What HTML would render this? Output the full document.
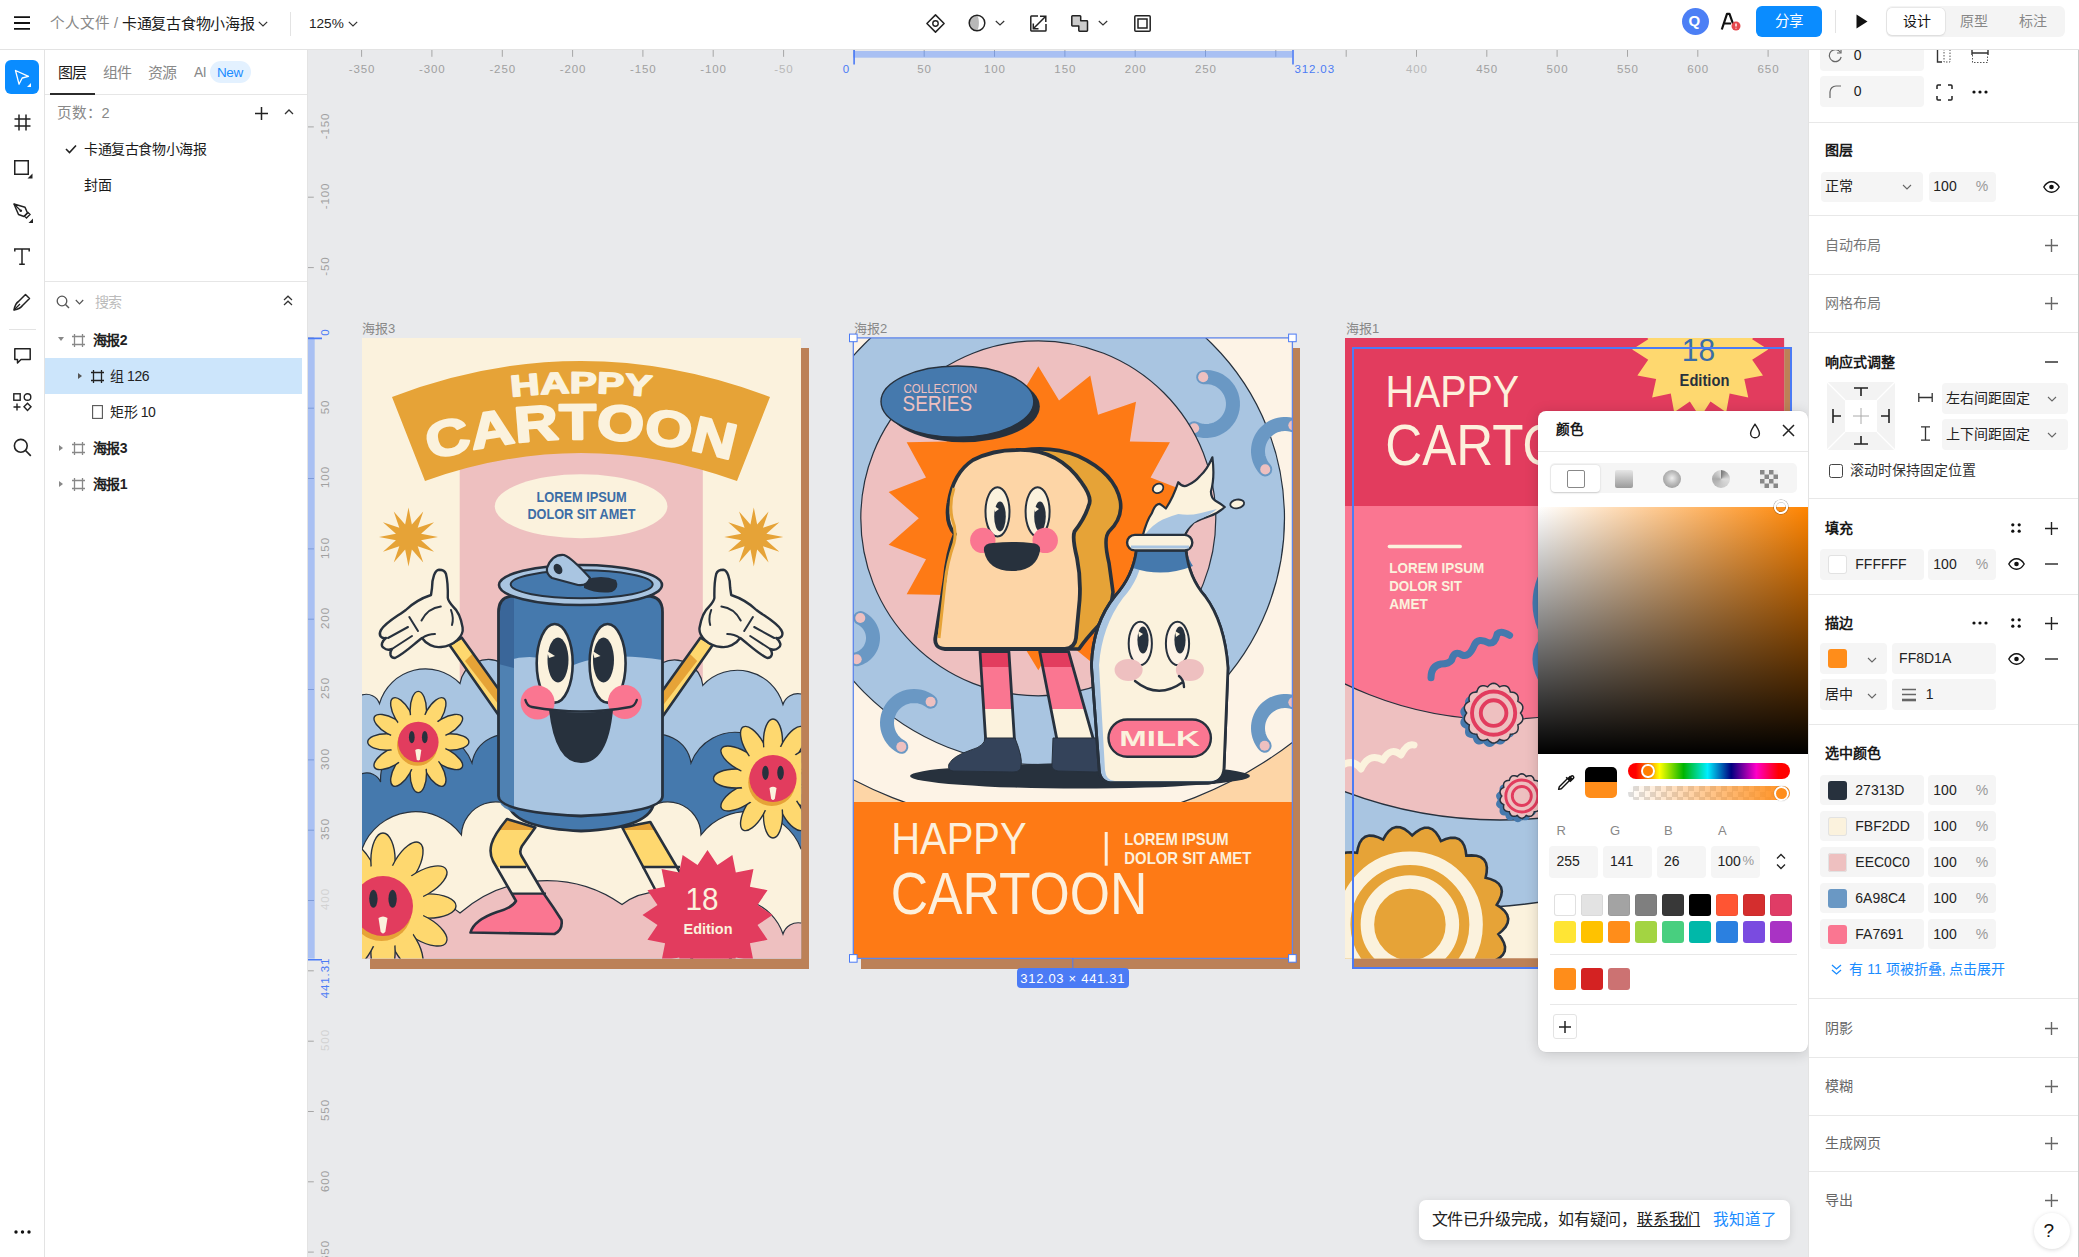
<!DOCTYPE html>
<html lang="zh-CN">
<head>
<meta charset="utf-8">
<style>
*{box-sizing:border-box;margin:0;padding:0}
html,body{width:2079px;height:1257px;overflow:hidden;background:#e9eaec;font-family:"Liberation Sans",sans-serif;color:#222}
.a{position:absolute}
.t{position:absolute;white-space:nowrap;line-height:1}
#top{z-index:5;left:0;top:0;width:2079px;height:50px;background:#fff;border-bottom:1px solid #e3e3e3}
#ltool{left:0;top:49px;width:45px;height:1208px;background:#fff;border-right:1px solid #e3e3e3}
#lpanel{left:45px;top:49px;width:263px;height:1208px;background:#fff;border-right:1px solid #e3e3e3}
#rpanel{left:1808px;top:49px;width:271px;height:1208px;background:#fff;border-left:1px solid #e3e3e3;overflow:hidden}
.sep{position:absolute;height:1px;background:#e8e8e8}
.inp{position:absolute;background:#f5f5f5;border-radius:4px}
.gl{color:#777}
.ttl{font-weight:bold;font-size:14px}
svg{position:absolute;overflow:visible}
#rpanel .t{margin-left:-2.2px}
#lpanel .t{font-size:14px;letter-spacing:-0.4px}
</style>
</head>
<body>
<!-- CANVAS -->
<div id="canvas" class="a" style="left:308px;top:50px;width:1500px;height:1207px;background:#e9eaec"></div>
<svg style="left:0;top:0;position:absolute" width="2079" height="1257">
<path d="M361.6 50V56.8" stroke="#a6a6a6" stroke-width="1"/>
<path d="M431.9 50V56.8" stroke="#a6a6a6" stroke-width="1"/>
<path d="M502.3 50V56.8" stroke="#a6a6a6" stroke-width="1"/>
<path d="M572.6 50V56.8" stroke="#a6a6a6" stroke-width="1"/>
<path d="M642.9 50V56.8" stroke="#a6a6a6" stroke-width="1"/>
<path d="M713.2 50V56.8" stroke="#a6a6a6" stroke-width="1"/>
<path d="M783.6 50V56.8" stroke="#a6a6a6" stroke-width="1"/>
<path d="M853.9 50V56.8" stroke="#a6a6a6" stroke-width="1"/>
<path d="M924.2 50V56.8" stroke="#a6a6a6" stroke-width="1"/>
<path d="M994.5 50V56.8" stroke="#a6a6a6" stroke-width="1"/>
<path d="M1064.9 50V56.8" stroke="#a6a6a6" stroke-width="1"/>
<path d="M1135.2 50V56.8" stroke="#a6a6a6" stroke-width="1"/>
<path d="M1205.5 50V56.8" stroke="#a6a6a6" stroke-width="1"/>
<path d="M1275.8 50V56.8" stroke="#a6a6a6" stroke-width="1"/>
<path d="M1346.2 50V56.8" stroke="#a6a6a6" stroke-width="1"/>
<path d="M1416.5 50V56.8" stroke="#a6a6a6" stroke-width="1"/>
<path d="M1486.8 50V56.8" stroke="#a6a6a6" stroke-width="1"/>
<path d="M1557.1 50V56.8" stroke="#a6a6a6" stroke-width="1"/>
<path d="M1627.5 50V56.8" stroke="#a6a6a6" stroke-width="1"/>
<path d="M1697.8 50V56.8" stroke="#a6a6a6" stroke-width="1"/>
<path d="M1768.1 50V56.8" stroke="#a6a6a6" stroke-width="1"/>
<rect x="853.3" y="51" width="438.9" height="6.7" fill="#a9c0f3"/>
<path d="M924.2 51V56.8" stroke="#7f9bd8" stroke-width="1"/>
<path d="M994.5 51V56.8" stroke="#7f9bd8" stroke-width="1"/>
<path d="M1064.9 51V56.8" stroke="#7f9bd8" stroke-width="1"/>
<path d="M1135.2 51V56.8" stroke="#7f9bd8" stroke-width="1"/>
<path d="M1205.5 51V56.8" stroke="#7f9bd8" stroke-width="1"/>
<path d="M1275.8 51V56.8" stroke="#7f9bd8" stroke-width="1"/>
<path d="M854.1 50V64.5M1293.0 50V64.5" stroke="#4b7bf5" stroke-width="1.6"/>
</svg>
<div class="t" style="left:337.0px;top:63.5px;width:50px;text-align:center;font-size:11.5px;letter-spacing:0.9px;color:#a0a0a0">-350</div>
<div class="t" style="left:407.3px;top:63.5px;width:50px;text-align:center;font-size:11.5px;letter-spacing:0.9px;color:#a0a0a0">-300</div>
<div class="t" style="left:477.7px;top:63.5px;width:50px;text-align:center;font-size:11.5px;letter-spacing:0.9px;color:#a0a0a0">-250</div>
<div class="t" style="left:548.0px;top:63.5px;width:50px;text-align:center;font-size:11.5px;letter-spacing:0.9px;color:#a0a0a0">-200</div>
<div class="t" style="left:618.3px;top:63.5px;width:50px;text-align:center;font-size:11.5px;letter-spacing:0.9px;color:#a0a0a0">-150</div>
<div class="t" style="left:688.6px;top:63.5px;width:50px;text-align:center;font-size:11.5px;letter-spacing:0.9px;color:#a0a0a0">-100</div>
<div class="t" style="left:759.0px;top:63.5px;width:50px;text-align:center;font-size:11.5px;letter-spacing:0.9px;color:#b8b8b8">-50</div>
<div class="t" style="left:899.6px;top:63.5px;width:50px;text-align:center;font-size:11.5px;letter-spacing:0.9px;color:#a0a0a0">50</div>
<div class="t" style="left:969.9px;top:63.5px;width:50px;text-align:center;font-size:11.5px;letter-spacing:0.9px;color:#a0a0a0">100</div>
<div class="t" style="left:1040.3px;top:63.5px;width:50px;text-align:center;font-size:11.5px;letter-spacing:0.9px;color:#a0a0a0">150</div>
<div class="t" style="left:1110.6px;top:63.5px;width:50px;text-align:center;font-size:11.5px;letter-spacing:0.9px;color:#a0a0a0">200</div>
<div class="t" style="left:1180.9px;top:63.5px;width:50px;text-align:center;font-size:11.5px;letter-spacing:0.9px;color:#a0a0a0">250</div>
<div class="t" style="left:1391.9px;top:63.5px;width:50px;text-align:center;font-size:11.5px;letter-spacing:0.9px;color:#b8b8b8">400</div>
<div class="t" style="left:1462.2px;top:63.5px;width:50px;text-align:center;font-size:11.5px;letter-spacing:0.9px;color:#a0a0a0">450</div>
<div class="t" style="left:1532.5px;top:63.5px;width:50px;text-align:center;font-size:11.5px;letter-spacing:0.9px;color:#a0a0a0">500</div>
<div class="t" style="left:1602.9px;top:63.5px;width:50px;text-align:center;font-size:11.5px;letter-spacing:0.9px;color:#a0a0a0">550</div>
<div class="t" style="left:1673.2px;top:63.5px;width:50px;text-align:center;font-size:11.5px;letter-spacing:0.9px;color:#a0a0a0">600</div>
<div class="t" style="left:1743.5px;top:63.5px;width:50px;text-align:center;font-size:11.5px;letter-spacing:0.9px;color:#a0a0a0">650</div>
<div class="t" style="left:842.8px;top:63.5px;font-size:11.5px;letter-spacing:0.9px;color:#4b7bf5">0</div>
<div class="t" style="left:1294.4px;top:63.5px;font-size:11.5px;letter-spacing:0.9px;color:#4b7bf5">312.03</div>
<svg style="left:0;top:0;position:absolute" width="2079" height="1257">
<path d="M308 126.9H313.8" stroke="#a6a6a6" stroke-width="1"/>
<path d="M308 197.2H313.8" stroke="#a6a6a6" stroke-width="1"/>
<path d="M308 267.6H313.8" stroke="#a6a6a6" stroke-width="1"/>
<path d="M308 337.9H313.8" stroke="#a6a6a6" stroke-width="1"/>
<path d="M308 408.2H313.8" stroke="#a6a6a6" stroke-width="1"/>
<path d="M308 478.5H313.8" stroke="#a6a6a6" stroke-width="1"/>
<path d="M308 548.9H313.8" stroke="#a6a6a6" stroke-width="1"/>
<path d="M308 619.2H313.8" stroke="#a6a6a6" stroke-width="1"/>
<path d="M308 689.5H313.8" stroke="#a6a6a6" stroke-width="1"/>
<path d="M308 759.9H313.8" stroke="#a6a6a6" stroke-width="1"/>
<path d="M308 830.2H313.8" stroke="#a6a6a6" stroke-width="1"/>
<path d="M308 900.5H313.8" stroke="#a6a6a6" stroke-width="1"/>
<path d="M308 970.8H313.8" stroke="#a6a6a6" stroke-width="1"/>
<path d="M308 1041.2H313.8" stroke="#a6a6a6" stroke-width="1"/>
<path d="M308 1111.5H313.8" stroke="#a6a6a6" stroke-width="1"/>
<path d="M308 1181.8H313.8" stroke="#a6a6a6" stroke-width="1"/>
<path d="M308 1252.1H313.8" stroke="#a6a6a6" stroke-width="1"/>
<rect x="307.5" y="337.9" width="7.2" height="620.7" fill="#a9c0f3"/>
<path d="M308 408.2H314" stroke="#7f9bd8" stroke-width="1"/>
<path d="M308 478.5H314" stroke="#7f9bd8" stroke-width="1"/>
<path d="M308 548.9H314" stroke="#7f9bd8" stroke-width="1"/>
<path d="M308 619.2H314" stroke="#7f9bd8" stroke-width="1"/>
<path d="M308 689.5H314" stroke="#7f9bd8" stroke-width="1"/>
<path d="M308 759.9H314" stroke="#7f9bd8" stroke-width="1"/>
<path d="M308 830.2H314" stroke="#7f9bd8" stroke-width="1"/>
<path d="M308 900.5H314" stroke="#7f9bd8" stroke-width="1"/>
<path d="M307.5 338.4H322M307.5 959.8H322" stroke="#4b7bf5" stroke-width="1.6"/>
</svg>
<div class="t" style="left:300.5px;top:119.7px;width:50px;height:12px;text-align:center;font-size:11.5px;letter-spacing:0.9px;color:#a0a0a0;transform:rotate(-90deg)">-150</div>
<div class="t" style="left:300.5px;top:190.0px;width:50px;height:12px;text-align:center;font-size:11.5px;letter-spacing:0.9px;color:#a0a0a0;transform:rotate(-90deg)">-100</div>
<div class="t" style="left:300.5px;top:260.4px;width:50px;height:12px;text-align:center;font-size:11.5px;letter-spacing:0.9px;color:#a0a0a0;transform:rotate(-90deg)">-50</div>
<div class="t" style="left:300.5px;top:401.0px;width:50px;height:12px;text-align:center;font-size:11.5px;letter-spacing:0.9px;color:#a0a0a0;transform:rotate(-90deg)">50</div>
<div class="t" style="left:300.5px;top:471.3px;width:50px;height:12px;text-align:center;font-size:11.5px;letter-spacing:0.9px;color:#a0a0a0;transform:rotate(-90deg)">100</div>
<div class="t" style="left:300.5px;top:541.7px;width:50px;height:12px;text-align:center;font-size:11.5px;letter-spacing:0.9px;color:#a0a0a0;transform:rotate(-90deg)">150</div>
<div class="t" style="left:300.5px;top:612.0px;width:50px;height:12px;text-align:center;font-size:11.5px;letter-spacing:0.9px;color:#a0a0a0;transform:rotate(-90deg)">200</div>
<div class="t" style="left:300.5px;top:682.3px;width:50px;height:12px;text-align:center;font-size:11.5px;letter-spacing:0.9px;color:#a0a0a0;transform:rotate(-90deg)">250</div>
<div class="t" style="left:300.5px;top:752.6px;width:50px;height:12px;text-align:center;font-size:11.5px;letter-spacing:0.9px;color:#a0a0a0;transform:rotate(-90deg)">300</div>
<div class="t" style="left:300.5px;top:823.0px;width:50px;height:12px;text-align:center;font-size:11.5px;letter-spacing:0.9px;color:#a0a0a0;transform:rotate(-90deg)">350</div>
<div class="t" style="left:300.5px;top:893.3px;width:50px;height:12px;text-align:center;font-size:11.5px;letter-spacing:0.9px;color:#d2d2d2;transform:rotate(-90deg)">400</div>
<div class="t" style="left:300.5px;top:1034.0px;width:50px;height:12px;text-align:center;font-size:11.5px;letter-spacing:0.9px;color:#d2d2d2;transform:rotate(-90deg)">500</div>
<div class="t" style="left:300.5px;top:1104.3px;width:50px;height:12px;text-align:center;font-size:11.5px;letter-spacing:0.9px;color:#a0a0a0;transform:rotate(-90deg)">550</div>
<div class="t" style="left:300.5px;top:1174.6px;width:50px;height:12px;text-align:center;font-size:11.5px;letter-spacing:0.9px;color:#a0a0a0;transform:rotate(-90deg)">600</div>
<div class="t" style="left:300.5px;top:1244.9px;width:50px;height:12px;text-align:center;font-size:11.5px;letter-spacing:0.9px;color:#a0a0a0;transform:rotate(-90deg)">650</div>
<div class="t" style="left:300.5px;top:326.4px;width:50px;height:12px;text-align:center;font-size:11.5px;letter-spacing:0.9px;color:#4b7bf5;transform:rotate(-90deg)">0</div>
<div class="t" style="left:300.5px;top:972.1px;width:50px;height:12px;text-align:center;font-size:11.5px;letter-spacing:0.9px;color:#4b7bf5;transform:rotate(-90deg)">441.31</div>
<div class="t" style="left:362px;top:321.5px;font-size:13px;color:#888">海报3</div>
<div class="t" style="left:854px;top:321.5px;font-size:13px;color:#888">海报2</div>
<div class="t" style="left:1346px;top:321.5px;font-size:13px;color:#888">海报1</div>
<div class="a" style="left:369.5px;top:347.9px;width:439.1px;height:621.3px;background:#bc8157"></div>
<div class="a" style="left:860.8px;top:347.9px;width:439.1px;height:621.3px;background:#bc8157"></div>
<div class="a" style="left:1352.5px;top:347.9px;width:439.1px;height:621.3px;background:#bc8157"></div>
<svg style="left:362px;top:337.9px" width="439.1" height="620.5" viewBox="0 0 439.1 620.5"><defs><clipPath id="c3"><rect width="439.1" height="620.5"/></clipPath></defs><g clip-path="url(#c3)">
<rect width="439.1" height="620.5" fill="#fbf2dd"/>
<rect x="97.7" y="110" width="243.1" height="510.5" fill="#eec0c0"/>
<path d="M30,59 Q219,-13 408,59 L375,143 Q219,87 63,143 Z" fill="#e6a337"/>
<text x="0" y="0" text-anchor="middle" font-family="Liberation Sans" font-weight="bold" font-size="30" fill="#fbf2dd" transform="translate(163.75,57.49) rotate(-5.15) scale(1.35,1)" stroke="#fbf2dd" stroke-width="1.6" stroke-linejoin="round">H</text>
<text x="0" y="0" text-anchor="middle" font-family="Liberation Sans" font-weight="bold" font-size="30" fill="#fbf2dd" transform="translate(193.02,55.55) rotate(-2.43) scale(1.35,1)" stroke="#fbf2dd" stroke-width="1.6" stroke-linejoin="round">A</text>
<text x="0" y="0" text-anchor="middle" font-family="Liberation Sans" font-weight="bold" font-size="30" fill="#fbf2dd" transform="translate(221.24,55) rotate(0.21) scale(1.35,1)" stroke="#fbf2dd" stroke-width="1.6" stroke-linejoin="round">P</text>
<text x="0" y="0" text-anchor="middle" font-family="Liberation Sans" font-weight="bold" font-size="30" fill="#fbf2dd" transform="translate(248.33,55.7) rotate(2.74) scale(1.35,1)" stroke="#fbf2dd" stroke-width="1.6" stroke-linejoin="round">P</text>
<text x="0" y="0" text-anchor="middle" font-family="Liberation Sans" font-weight="bold" font-size="30" fill="#fbf2dd" transform="translate(275.37,57.59) rotate(5.26) scale(1.35,1)" stroke="#fbf2dd" stroke-width="1.6" stroke-linejoin="round">Y</text>
<text x="0" y="0" text-anchor="middle" font-family="Liberation Sans" font-weight="bold" font-size="50" fill="#fbf2dd" transform="translate(89.54,116.69) rotate(-13.63) scale(1.21,1)" stroke="#fbf2dd" stroke-width="2.2" stroke-linejoin="round">C</text>
<text x="0" y="0" text-anchor="middle" font-family="Liberation Sans" font-weight="bold" font-size="50" fill="#fbf2dd" transform="translate(132.22,108.05) rotate(-9.23) scale(1.21,1)" stroke="#fbf2dd" stroke-width="2.2" stroke-linejoin="round">A</text>
<text x="0" y="0" text-anchor="middle" font-family="Liberation Sans" font-weight="bold" font-size="50" fill="#fbf2dd" transform="translate(175.46,102.78) rotate(-4.66) scale(1.21,1)" stroke="#fbf2dd" stroke-width="2.2" stroke-linejoin="round">R</text>
<text x="0" y="0" text-anchor="middle" font-family="Liberation Sans" font-weight="bold" font-size="50" fill="#fbf2dd" transform="translate(215.62,101.01) rotate(-0.36) scale(1.21,1)" stroke="#fbf2dd" stroke-width="2.2" stroke-linejoin="round">T</text>
<text x="0" y="0" text-anchor="middle" font-family="Liberation Sans" font-weight="bold" font-size="50" fill="#fbf2dd" transform="translate(257.49,102.39) rotate(4.12) scale(1.21,1)" stroke="#fbf2dd" stroke-width="2.2" stroke-linejoin="round">O</text>
<text x="0" y="0" text-anchor="middle" font-family="Liberation Sans" font-weight="bold" font-size="50" fill="#fbf2dd" transform="translate(304.11,107.78) rotate(9.06) scale(1.21,1)" stroke="#fbf2dd" stroke-width="2.2" stroke-linejoin="round">O</text>
<text x="0" y="0" text-anchor="middle" font-family="Liberation Sans" font-weight="bold" font-size="50" fill="#fbf2dd" transform="translate(348.46,116.69) rotate(13.63) scale(1.21,1)" stroke="#fbf2dd" stroke-width="2.2" stroke-linejoin="round">N</text>
<ellipse cx="219.1" cy="168.3" rx="86.3" ry="32" fill="#fbf2dd"/>
<text x="219.6" y="163.7" text-anchor="middle" font-family="Liberation Sans" font-weight="bold" font-size="15" fill="#3c6da6" textLength="90.4" lengthAdjust="spacingAndGlyphs">LOREM IPSUM</text>
<text x="219.4" y="181" text-anchor="middle" font-family="Liberation Sans" font-weight="bold" font-size="15" fill="#3c6da6" textLength="108" lengthAdjust="spacingAndGlyphs">DOLOR SIT AMET</text>
<path d="M46.5,169.5L49.86,186.44L61.25,173.45L55.69,189.81L72.05,184.25L59.06,195.64L76,199L59.06,202.36L72.05,213.75L55.69,208.19L61.25,224.55L49.86,211.56L46.5,228.5L43.14,211.56L31.75,224.55L37.31,208.19L20.95,213.75L33.94,202.36L17,199L33.94,195.64L20.95,184.25L37.31,189.81L31.75,173.45L43.14,186.44Z" fill="#e6a337"/>
<path d="M391.8,169.5L395.16,186.44L406.55,173.45L400.99,189.81L417.35,184.25L404.36,195.64L421.3,199L404.36,202.36L417.35,213.75L400.99,208.19L406.55,224.55L395.16,211.56L391.8,228.5L388.44,211.56L377.05,224.55L382.61,208.19L366.25,213.75L379.24,202.36L362.3,199L379.24,195.64L366.25,184.25L382.61,189.81L377.05,173.45L388.44,186.44Z" fill="#e6a337"/>
<path d="M-5,625.5L-5,357L0,357A13.88 13.88 0 0 1 17.5,365.6A47.86 47.86 0 0 1 98,345.5A28.75 28.75 0 0 1 140,325A170 170 0 0 1 300,325A28.52 28.52 0 0 1 340.8,347.3A47.42 47.42 0 0 1 421,366.5A15.68 15.68 0 0 1 439.1,356L444.1,356L444.1,625.5Z" fill="#a9c5e1" stroke="#27313d" stroke-width="1.2"/>
<path d="M-5,625.5L-5,435.7L0,435.7A14.96 14.96 0 0 1 18.6,444A47.23 47.23 0 0 1 110,425A34.9 34.9 0 0 1 160,400A100 100 0 0 1 280,400A34.02 34.02 0 0 1 329,425A47.29 47.29 0 0 1 420.5,444A14.96 14.96 0 0 1 439.1,435.7L444.1,435.7L444.1,625.5Z" fill="#4579ad" stroke="#27313d" stroke-width="1.2"/>
<path d="M-5,625.5L-5,511L0,511A56.98 56.98 0 0 1 99.4,497A34.37 34.37 0 0 1 160,476A362.5 362.5 0 0 1 280,476A33.28 33.28 0 0 1 339,497A57.57 57.57 0 0 1 439.1,511L444.1,511L444.1,625.5Z" fill="#fbf2dd" stroke="#27313d" stroke-width="1.2"/>
<path d="M-5,625.5L-5,590L0,590A66.85 66.85 0 0 1 98,575A131.48 131.48 0 0 1 260,566.5A61.09 61.09 0 0 1 340,572A51.55 51.55 0 0 1 421,596A16.02 16.02 0 0 1 439.1,585L444.1,585L444.1,625.5Z" fill="#eec0c0" stroke="#27313d" stroke-width="1.2"/>
<path d="M87.5,307 L99.8,299.7 L140,356 L140,382 Z" fill="#fed86f"/><path d="M103,323 L110.2,316 L140,358 L140,371 Z" fill="#e6a337"/><path d="M87.5,307 L99.8,299.7 L140,356 L140,382 Z" fill="none" stroke="#27313d" stroke-width="2.6" stroke-linejoin="round"/>
<g transform="translate(438.2,0) scale(-1,1)"><path d="M87.5,307 L99.8,299.7 L140,356 L140,382 Z" fill="#fed86f"/><path d="M103,323 L110.2,316 L140,358 L140,371 Z" fill="#e6a337"/><path d="M87.5,307 L99.8,299.7 L140,356 L140,382 Z" fill="none" stroke="#27313d" stroke-width="2.6" stroke-linejoin="round"/></g>
<path d="M77,231.8 C73,232 70,240 70,250 L69,257 C60,260 50,266 43.8,272 C36,278 24,284 19,292 C16,297 19,301 24,300 C20,303 18,308 22,310 C24,312 27,312 30,311 C27,315 28,320 33,320 C42,316 52,306 60,300 C64,306 72,310 79,309 C92,308 102,298 100.6,289.5 C99,280 95,272 91,268.5 C88,265 86,262 85.8,259.8 C86,250 85,240 84,236 C83,233 80,231.8 77,231.8 Z" fill="#fbf2dd" stroke="#27313d" stroke-width="2.4" stroke-linejoin="round"/><path d="M59.5,282.5 Q66,270 78.8,268.5 M47.3,279 L56,293 M26,300 L46,289 M30,311 L50,298 M60,300 Q66,296 73,296 M89,272 Q92,280 90,287" fill="none" stroke="#27313d" stroke-width="2" stroke-linecap="round"/>
<g transform="translate(438.2,0) scale(-1,1)"><path d="M77,231.8 C73,232 70,240 70,250 L69,257 C60,260 50,266 43.8,272 C36,278 24,284 19,292 C16,297 19,301 24,300 C20,303 18,308 22,310 C24,312 27,312 30,311 C27,315 28,320 33,320 C42,316 52,306 60,300 C64,306 72,310 79,309 C92,308 102,298 100.6,289.5 C99,280 95,272 91,268.5 C88,265 86,262 85.8,259.8 C86,250 85,240 84,236 C83,233 80,231.8 77,231.8 Z" fill="#fbf2dd" stroke="#27313d" stroke-width="2.4" stroke-linejoin="round"/><path d="M59.5,282.5 Q66,270 78.8,268.5 M47.3,279 L56,293 M26,300 L46,289 M30,311 L50,298 M60,300 Q66,296 73,296 M89,272 Q92,280 90,287" fill="none" stroke="#27313d" stroke-width="2" stroke-linecap="round"/></g>
<linearGradient id="lg3" gradientUnits="userSpaceOnUse" x1="0" y1="480" x2="0" y2="600"><stop offset="0" stop-color="#e6a337"/><stop offset="0.1" stop-color="#e6a337"/><stop offset="0.1" stop-color="#fed86f"/><stop offset="0.408" stop-color="#fed86f"/><stop offset="0.408" stop-color="#fbf2dd"/><stop offset="0.63" stop-color="#fbf2dd"/><stop offset="0.63" stop-color="#fa7691"/><stop offset="1" stop-color="#fa7691"/></linearGradient>
<path d="M145,481 Q132,497 129.5,506 Q127,515 131,523 L154,563 Q150,570 135,574 Q112,582 108.5,594.5 L192.5,596 Q201,592 199.5,582 Q192,570 182,556 L159.3,517.5 Q157,513 160,508 L173.3,489.5 Z" fill="url(#lg3)" stroke="#27313d" stroke-width="2.6" stroke-linejoin="round"/>
<path d="M138,529 L164,529 M150,555.6 L184,555.6" stroke="#27313d" stroke-width="2.4"/>
<path d="M260.3,489.5 L340,640 L380,640 L288.3,484 Z" fill="url(#lg3)" stroke="#27313d" stroke-width="2.6" stroke-linejoin="round"/>
<path d="M280,529 L318,529" stroke="#27313d" stroke-width="2.4"/>
<path d="M146,462 Q146,490 219,493 Q292,490 292,462 Z" fill="#4579ad" stroke="#27313d" stroke-width="2.8"/>
<path d="M136.5,274 Q136.5,258 152,258 L285,258 Q300.5,258 300.5,274 L300.5,458 Q300.5,474 219,478 Q136.5,474 136.5,458 Z" fill="#4579ad"/>
<path d="M136.5,326 Q172,310 205,330 Q240,312 300.5,322 L300.5,458 Q300.5,474 219,478 Q136.5,474 136.5,458 Z" fill="#a9c5e1"/>
<path d="M136.5,274 Q136.5,258 152,258 L152,474 Q136.5,470 136.5,458 Z" fill="#4579ad" opacity="0.9"/>
<path d="M136.5,274 Q136.5,258 152,258 L152,330 L136.5,326 Z" fill="#3a6699"/>
<path d="M136.5,274 Q136.5,258 152,258 L285,258 Q300.5,258 300.5,274 L300.5,458 Q300.5,474 219,478 Q136.5,474 136.5,458 Z" fill="none" stroke="#27313d" stroke-width="2.8"/>
<ellipse cx="218.5" cy="247" rx="81.5" ry="20" fill="#a9c5e1" stroke="#27313d" stroke-width="2.6"/>
<ellipse cx="219.7" cy="246.3" rx="71" ry="14" fill="#4579ad" stroke="#27313d" stroke-width="2"/>
<path d="M222,242 Q240,236 254,242 Q258,250 250,254 Q235,256 222,250 Z" fill="#27313d"/>
<path d="M185,230 Q190,216 202,217 Q210,220 228,240 Q226,248 216,247 L190,240 Q184,236 185,230 Z" fill="#a9c5e1" stroke="#27313d" stroke-width="2.2" stroke-linejoin="round"/>
<ellipse cx="196" cy="231" rx="4" ry="5.5" transform="rotate(-30 196 231)" fill="#27313d"/>
<ellipse cx="192.7" cy="325.3" rx="18" ry="39.3" fill="#fbf2dd" stroke="#27313d" stroke-width="2.6"/>
<ellipse cx="196" cy="322" rx="10.5" ry="22.5" fill="#27313d"/>
<path d="M185,313 L193,318 L187,320 Z" fill="#fbf2dd"/>
<ellipse cx="245.6" cy="325.3" rx="18" ry="39.3" fill="#fbf2dd" stroke="#27313d" stroke-width="2.6"/>
<ellipse cx="241.5" cy="322" rx="10.5" ry="22.5" fill="#27313d"/>
<path d="M230.5,313 L238.5,318 L232.5,320 Z" fill="#fbf2dd"/>
<circle cx="175.6" cy="364.6" r="17" fill="#fa7691"/>
<circle cx="262.9" cy="364" r="17" fill="#fa7691"/>
<path d="M163.4,362 Q165,368 170,369 Q219,378 268,369 Q273,368 274.8,362" fill="none" stroke="#27313d" stroke-width="2.4" stroke-linecap="round"/>
<path d="M187,372 Q219,377 251,372 Q246,425 219,425 Q193,425 187,372Z" fill="#27313d"/>
<g stroke="#27313d" stroke-width="1.4">
<ellipse cx="31.39" cy="0" rx="19.21" ry="8.21" fill="#fed86f" transform="translate(56.3,404) rotate(0)"/>
<ellipse cx="31.39" cy="0" rx="19.21" ry="8.21" fill="#fed86f" transform="translate(56.3,404) rotate(30)"/>
<ellipse cx="31.39" cy="0" rx="19.21" ry="8.21" fill="#fed86f" transform="translate(56.3,404) rotate(60)"/>
<ellipse cx="31.39" cy="0" rx="19.21" ry="8.21" fill="#fed86f" transform="translate(56.3,404) rotate(90)"/>
<ellipse cx="31.39" cy="0" rx="19.21" ry="8.21" fill="#fed86f" transform="translate(56.3,404) rotate(120)"/>
<ellipse cx="31.39" cy="0" rx="19.21" ry="8.21" fill="#fed86f" transform="translate(56.3,404) rotate(150)"/>
<ellipse cx="31.39" cy="0" rx="19.21" ry="8.21" fill="#fed86f" transform="translate(56.3,404) rotate(180)"/>
<ellipse cx="31.39" cy="0" rx="19.21" ry="8.21" fill="#fed86f" transform="translate(56.3,404) rotate(210)"/>
<ellipse cx="31.39" cy="0" rx="19.21" ry="8.21" fill="#fed86f" transform="translate(56.3,404) rotate(240)"/>
<ellipse cx="31.39" cy="0" rx="19.21" ry="8.21" fill="#fed86f" transform="translate(56.3,404) rotate(270)"/>
<ellipse cx="31.39" cy="0" rx="19.21" ry="8.21" fill="#fed86f" transform="translate(56.3,404) rotate(300)"/>
<ellipse cx="31.39" cy="0" rx="19.21" ry="8.21" fill="#fed86f" transform="translate(56.3,404) rotate(330)"/>
</g>
<circle cx="56.3" cy="404" r="28.01" fill="#fed86f"/>
<circle cx="55.28" cy="407.45" r="20.3" fill="#e6a337"/>
<circle cx="56.3" cy="404" r="20.3" fill="#e23c5e"/>
<ellipse cx="49.8" cy="399.13" rx="2.84" ry="6.09" fill="#27313d"/>
<ellipse cx="62.8" cy="399.13" rx="2.84" ry="6.09" fill="#27313d"/>
<path d="M53.25,412.12Q56.3,410.09 59.34,412.12L57.92,421.25Q56.3,423.89 54.68,421.25Z" fill="#fbf2dd"/>
<g stroke="#27313d" stroke-width="1.4">
<ellipse cx="36.83" cy="0" rx="22.67" ry="9.55" fill="#fed86f" transform="translate(411,440.5) rotate(0)"/>
<ellipse cx="36.83" cy="0" rx="22.67" ry="9.55" fill="#fed86f" transform="translate(411,440.5) rotate(30)"/>
<ellipse cx="36.83" cy="0" rx="22.67" ry="9.55" fill="#fed86f" transform="translate(411,440.5) rotate(60)"/>
<ellipse cx="36.83" cy="0" rx="22.67" ry="9.55" fill="#fed86f" transform="translate(411,440.5) rotate(90)"/>
<ellipse cx="36.83" cy="0" rx="22.67" ry="9.55" fill="#fed86f" transform="translate(411,440.5) rotate(120)"/>
<ellipse cx="36.83" cy="0" rx="22.67" ry="9.55" fill="#fed86f" transform="translate(411,440.5) rotate(150)"/>
<ellipse cx="36.83" cy="0" rx="22.67" ry="9.55" fill="#fed86f" transform="translate(411,440.5) rotate(180)"/>
<ellipse cx="36.83" cy="0" rx="22.67" ry="9.55" fill="#fed86f" transform="translate(411,440.5) rotate(210)"/>
<ellipse cx="36.83" cy="0" rx="22.67" ry="9.55" fill="#fed86f" transform="translate(411,440.5) rotate(240)"/>
<ellipse cx="36.83" cy="0" rx="22.67" ry="9.55" fill="#fed86f" transform="translate(411,440.5) rotate(270)"/>
<ellipse cx="36.83" cy="0" rx="22.67" ry="9.55" fill="#fed86f" transform="translate(411,440.5) rotate(300)"/>
<ellipse cx="36.83" cy="0" rx="22.67" ry="9.55" fill="#fed86f" transform="translate(411,440.5) rotate(330)"/>
</g>
<circle cx="411" cy="440.5" r="32.57" fill="#fed86f"/>
<circle cx="409.82" cy="444.51" r="23.6" fill="#e6a337"/>
<circle cx="411" cy="440.5" r="23.6" fill="#e23c5e"/>
<ellipse cx="403.45" cy="434.84" rx="3.3" ry="7.08" fill="#27313d"/>
<ellipse cx="418.55" cy="434.84" rx="3.3" ry="7.08" fill="#27313d"/>
<path d="M407.46,449.94Q411,447.58 414.54,449.94L412.89,460.56Q411,463.63 409.11,460.56Z" fill="#fbf2dd"/>
<g stroke="#27313d" stroke-width="1.4">
<ellipse cx="45.5" cy="0" rx="27.5" ry="12.14" fill="#fed86f" transform="translate(21,568) rotate(0)"/>
<ellipse cx="45.5" cy="0" rx="27.5" ry="12.14" fill="#fed86f" transform="translate(21,568) rotate(30)"/>
<ellipse cx="45.5" cy="0" rx="27.5" ry="12.14" fill="#fed86f" transform="translate(21,568) rotate(60)"/>
<ellipse cx="45.5" cy="0" rx="27.5" ry="12.14" fill="#fed86f" transform="translate(21,568) rotate(90)"/>
<ellipse cx="45.5" cy="0" rx="27.5" ry="12.14" fill="#fed86f" transform="translate(21,568) rotate(120)"/>
<ellipse cx="45.5" cy="0" rx="27.5" ry="12.14" fill="#fed86f" transform="translate(21,568) rotate(150)"/>
<ellipse cx="45.5" cy="0" rx="27.5" ry="12.14" fill="#fed86f" transform="translate(21,568) rotate(180)"/>
<ellipse cx="45.5" cy="0" rx="27.5" ry="12.14" fill="#fed86f" transform="translate(21,568) rotate(210)"/>
<ellipse cx="45.5" cy="0" rx="27.5" ry="12.14" fill="#fed86f" transform="translate(21,568) rotate(240)"/>
<ellipse cx="45.5" cy="0" rx="27.5" ry="12.14" fill="#fed86f" transform="translate(21,568) rotate(270)"/>
<ellipse cx="45.5" cy="0" rx="27.5" ry="12.14" fill="#fed86f" transform="translate(21,568) rotate(300)"/>
<ellipse cx="45.5" cy="0" rx="27.5" ry="12.14" fill="#fed86f" transform="translate(21,568) rotate(330)"/>
</g>
<circle cx="21" cy="568" r="41.4" fill="#fed86f"/>
<circle cx="19.5" cy="573.1" r="30" fill="#e6a337"/>
<circle cx="21" cy="568" r="30" fill="#e23c5e"/>
<ellipse cx="11.4" cy="560.8" rx="4.2" ry="9" fill="#27313d"/>
<ellipse cx="30.6" cy="560.8" rx="4.2" ry="9" fill="#27313d"/>
<path d="M16.5,580Q21,577 25.5,580L23.4,593.5Q21,597.4 18.6,593.5Z" fill="#fbf2dd"/>
<path d="M345.5,512L355.45,526.98L370.37,516.95L373.83,534.6L391.46,531.04L387.9,548.67L405.55,552.13L395.52,567.05L410.5,577L395.52,586.95L405.55,601.87L387.9,605.33L391.46,622.96L373.83,619.4L370.37,637.05L355.45,627.02L345.5,642L335.55,627.02L320.63,637.05L317.17,619.4L299.54,622.96L303.1,605.33L285.45,601.87L295.48,586.95L280.5,577L295.48,567.05L285.45,552.13L303.1,548.67L299.54,531.04L317.17,534.6L320.63,516.95L335.55,526.98Z" fill="#e23c5e"/>
<text x="340" y="571.7" text-anchor="middle" font-family="Liberation Sans" font-size="31" fill="#fbf2dd" textLength="33" lengthAdjust="spacingAndGlyphs">18</text>
<text x="346" y="596" text-anchor="middle" font-family="Liberation Sans" font-weight="bold" font-size="15" fill="#fbf2dd" textLength="49" lengthAdjust="spacingAndGlyphs">Edition</text>
</g></svg>
<svg style="left:853.3px;top:337.9px" width="439.1" height="620.5" viewBox="0 0 439.1 620.5"><defs><clipPath id="c2"><rect width="439.1" height="620.5"/></clipPath></defs><g clip-path="url(#c2)">
<rect width="439.1" height="620.5" fill="#fdd5a6"/>
<circle cx="190.5" cy="77.8" r="410.6" fill="#fdf3e6" stroke="#27313d" stroke-width="1.2"/>
<circle cx="185.3" cy="180.3" r="246.2" fill="#a9c5e1" stroke="#27313d" stroke-width="1.2"/>
<path d="M350.18,39.15L353.5,39L356.82,39.27L360.08,39.94L363.23,41.01L366.23,42.46L369.02,44.27L371.57,46.4L373.84,48.84L375.8,51.53L377.4,54.45L378.64,57.54L379.49,60.76L379.93,64.05L379.96,67.38L379.59,70.69L378.81,73.92L377.64,77.04L376.09,79.99L374.2,82.72L371.98,85.2L369.47,87.39L366.72,89.26L363.75,90.77L360.62,91.9L357.38,92.64L354.07,92.98L350.74,92.91L347.45,92.42L344.24,91.54L341.16,90.27" fill="none" stroke="#6a98c4" stroke-width="14" stroke-linecap="round"/><circle cx="350.18" cy="39.15" r="5.04" fill="#eec0c0"/><circle cx="341.16" cy="90.27" r="5.04" fill="#eec0c0"/>
<path d="M440.34,87.32L438.06,86.69L435.73,86.26L433.37,86.03L430.99,86.02L428.63,86.21L426.29,86.61L424,87.21L421.77,88.01L419.62,89.01L417.56,90.19L415.61,91.54L413.79,93.06L412.11,94.74L410.59,96.55L409.23,98.49L408.04,100.55L407.04,102.7L406.24,104.93L405.63,107.22L405.22,109.55L405.02,111.92L405.03,114.29L405.25,116.65L405.67,118.98L406.3,121.27L407.12,123.49L408.14,125.63L409.34,127.68L410.71,129.61L412.25,131.41" fill="none" stroke="#6a98c4" stroke-width="14" stroke-linecap="round"/><circle cx="440.34" cy="87.32" r="5.04" fill="#eec0c0"/><circle cx="412.25" cy="131.41" r="5.04" fill="#eec0c0"/>
<path d="M7.3,280.06L8.89,280.88L10.41,281.83L11.85,282.9L13.19,284.09L14.43,285.37L15.57,286.76L16.59,288.23L17.48,289.78L18.25,291.4L18.88,293.08L19.38,294.8L19.73,296.56L19.94,298.34L20,300.13L19.92,301.92L19.69,303.69L19.32,305.45L18.8,307.16L18.15,308.83L17.36,310.44L16.45,311.98L15.41,313.44L14.26,314.82L13,316.09L11.65,317.26L10.2,318.31L8.67,319.24L7.06,320.05L5.4,320.72L3.69,321.25" fill="none" stroke="#6a98c4" stroke-width="14" stroke-linecap="round"/><circle cx="7.3" cy="280.06" r="5.04" fill="#eec0c0"/><circle cx="3.69" cy="321.25" r="5.04" fill="#eec0c0"/>
<path d="M77.62,363.72L75.17,362.02L72.55,360.6L69.79,359.47L66.92,358.66L63.98,358.16L61,358L58.02,358.16L55.08,358.66L52.21,359.47L49.45,360.6L46.83,362.02L44.38,363.72L42.13,365.69L40.12,367.89L38.36,370.29L36.87,372.88L35.68,375.62L34.8,378.47L34.24,381.4L34.01,384.37L34.1,387.35L34.53,390.31L35.27,393.19L36.33,395.98L37.7,398.64L39.34,401.12L41.25,403.41L43.41,405.48L45.77,407.3L48.32,408.84" fill="none" stroke="#6a98c4" stroke-width="14" stroke-linecap="round"/><circle cx="77.62" cy="363.72" r="5.04" fill="#eec0c0"/><circle cx="48.32" cy="408.84" r="5.04" fill="#eec0c0"/>
<path d="M440.34,364.32L438.09,363.7L435.79,363.27L433.46,363.04L431.12,363.01L428.79,363.19L426.48,363.57L424.21,364.15L422,364.92L419.87,365.88L417.83,367.02L415.89,368.33L414.07,369.81L412.39,371.44L410.86,373.2L409.49,375.1L408.28,377.1L407.25,379.2L406.41,381.39L405.76,383.64L405.31,385.93L405.06,388.26L405.01,390.6L405.16,392.93L405.51,395.24L406.07,397.52L406.82,399.73L407.75,401.88L408.87,403.93L410.17,405.88L411.62,407.71" fill="none" stroke="#6a98c4" stroke-width="14" stroke-linecap="round"/><circle cx="440.34" cy="364.32" r="5.04" fill="#eec0c0"/><circle cx="411.62" cy="407.71" r="5.04" fill="#eec0c0"/>
<circle cx="185.3" cy="180.3" r="177.5" fill="#eec0c0" stroke="#27313d" stroke-width="1.2"/>
<path d="M185.3,28.3L206.05,62.62L237.29,37.47L245.05,76.81L283,63.86L276.84,103.49L316.94,104.3L297.59,139.43L334.99,153.91L304.8,180.3L334.99,206.69L297.59,221.17L316.94,256.3L276.84,257.11L283,296.74L245.05,283.79L237.29,323.13L206.05,297.98L185.3,332.3L164.55,297.98L133.31,323.13L125.55,283.79L87.6,296.74L93.76,257.11L53.66,256.3L73.01,221.17L35.61,206.69L65.8,180.3L35.61,153.91L73.01,139.43L53.66,104.3L93.76,103.49L87.6,63.86L125.55,76.81L133.31,37.47L164.55,62.62Z" fill="#fe7a15"/>
<ellipse cx="110.4" cy="68.6" rx="76.4" ry="35.6" fill="#27313d"/>
<ellipse cx="104.4" cy="63.6" rx="76.4" ry="35.6" fill="#4579ad" stroke="#27313d" stroke-width="1.4"/>
<text x="50.4" y="54.7" font-family="Liberation Sans" font-size="12.2" fill="#eec0c0" textLength="73.8" lengthAdjust="spacingAndGlyphs">COLLECTION</text>
<text x="49.6" y="72.6" font-family="Liberation Sans" font-size="21.2" fill="#eec0c0" textLength="69.5" lengthAdjust="spacingAndGlyphs">SERIES</text>
<ellipse cx="227" cy="438" rx="170" ry="12.5" fill="#27313d"/>
<linearGradient id="lg2" gradientUnits="userSpaceOnUse" x1="0" y1="313" x2="0" y2="407"><stop offset="0" stop-color="#e23c5e"/><stop offset="0.17" stop-color="#e23c5e"/><stop offset="0.17" stop-color="#fa7691"/><stop offset="0.62" stop-color="#fa7691"/><stop offset="0.62" stop-color="#fbf2dd"/><stop offset="0.93" stop-color="#fbf2dd"/><stop offset="0.93" stop-color="#34435a"/></linearGradient>
<path d="M127,313.6L155.9,313.6L161.8,407.1L133,407.1Z" fill="url(#lg2)" stroke="#27313d" stroke-width="2.8" stroke-linejoin="round"/>
<path d="M186.7,313.6L215.6,313.6L242,407.1L205,407.1Z" fill="url(#lg2)" stroke="#27313d" stroke-width="2.8" stroke-linejoin="round"/>
<path d="M132,400 L162,400 Q170,420 168,428 Q168,434 160,434 L100,433 Q94,432 96,426 Q100,418 118,412 Q132,408 132,400Z" fill="#34435a" stroke="#27313d" stroke-width="1"/>
<path d="M200,400 L243,400 Q252,420 250,428 Q250,434 242,434 L205,433 Q198,432 199,426 Z" fill="#34435a" stroke="#27313d" stroke-width="1"/>
<path d="M170,112 Q200,108 225,118 Q262,135 267.3,163 Q270,180 256,193.5 Q250,200 256,225 L260,254 Q259,272 245,288 Q232,302 226,311 L200,311 Z" fill="#e6a337" stroke="#27313d" stroke-width="3.6" stroke-linejoin="round"/>
<path d="M163,112 Q205,110 229,145 Q240,160 235.5,168 Q232,180 221.5,193.5 Q219,200 224,220 Q228,240 226.6,262 L223,300 Q222,310 212,311 L92,311 Q80,310 82.7,298 L91.6,241.9 Q94,215 101.8,196 Q92,185 95.5,165 Q100,135 120,122 Q140,112 163,112 Z" fill="#fdd5a6" stroke="#27313d" stroke-width="3.8" stroke-linejoin="round"/>
<path d="M101,150 Q96,165 99,180 Q104,193 101,205 Q94,225 92,245 L86,300" fill="none" stroke="#e6a337" stroke-width="3"/>
<ellipse cx="144.5" cy="173.8" rx="12" ry="24.6" fill="#fbf2dd" stroke="#27313d" stroke-width="2"/>
<ellipse cx="147" cy="178.5" rx="5.8" ry="15" fill="#27313d"/>
<path d="M141,168 L146,171 L142,174Z" fill="#fbf2dd"/>
<ellipse cx="184.6" cy="173.8" rx="12" ry="24.6" fill="#fbf2dd" stroke="#27313d" stroke-width="2"/>
<ellipse cx="187" cy="178.5" rx="5.8" ry="15" fill="#27313d"/>
<path d="M181,168 L186,171 L182,174Z" fill="#fbf2dd"/>
<circle cx="129.8" cy="202.4" r="12.7" fill="#fa7691"/>
<circle cx="192.2" cy="202.4" r="12.7" fill="#fa7691"/>
<path d="M131,213 Q130,205 140,205 Q159,203 178,205 Q188,205 187,213 Q183,233 159,233 Q135,233 131,213 Z" fill="#27313d"/>
<path d="M283.4,212.4 L333,212.4 Q336,240 352,258 Q372,285 375,330 L371,430 Q370,445 355,445 L260,445 Q247,445 246.2,432 L238.4,327 Q240,285 262,258 Q280,238 283.4,212.4 Z" fill="#a9c5e1" stroke="#27313d" stroke-width="2.8" stroke-linejoin="round"/>
<path d="M290,214 L333,214 Q336,240 352,258 Q372,285 375,330 L371,430 Q370,443 355,443 L262,443 Q253,443 252,432 L246,327 Q249,288 270,260 Q288,240 290,214 Z" fill="#fbf2dd"/>
<path d="M283.4,212.4 L333,212.4 Q336,222 340,228 Q310,240 280,230 Z" fill="#4579ad"/>
<path d="M283.4,212.4 L333,212.4 Q336,240 352,258 Q372,285 375,330 L371,430 Q370,445 355,445 L260,445 Q247,445 246.2,432 L238.4,327 Q240,285 262,258 Q280,238 283.4,212.4 Z" fill="none" stroke="#27313d" stroke-width="2.8" stroke-linejoin="round"/>
<path d="M289.6,198 Q294,182 298.9,175.2 Q302,166 306.7,165.9 Q310,168 312.9,170.5 Q320,160 325.3,144.2 Q330,150 334.6,147.3 Q342,144 347,138 Q354,132 359.4,119.3 Q362,140 357.9,153.5 Q358,160 362.5,162.8 Q368,166 371.8,169 Q364,176 356.3,178.3 Q348,181 340.8,184.5 Q335,190 331.5,198 Z" fill="#fbf2dd" stroke="#27313d" stroke-width="2.2" stroke-linejoin="round"/>
<path d="M291.5,197 Q300,186 309.8,181.4 Q318,178 325.3,176 Q336,178 347,175.2 Q356,173 364,171 Q356,178 345,182 Q336,187 330,197 Z" fill="#a9c5e1"/>
<ellipse cx="305.1" cy="150.4" rx="5.5" ry="4.5" transform="rotate(-30 305.1 150.4)" fill="#fbf2dd" stroke="#27313d" stroke-width="1.8"/>
<ellipse cx="384.2" cy="165.9" rx="7" ry="4.3" transform="rotate(-10 384.2 165.9)" fill="#fbf2dd" stroke="#27313d" stroke-width="1.8"/>
<rect x="274.1" y="196.9" width="65.2" height="15.5" rx="7.7" fill="#fbf2dd" stroke="#27313d" stroke-width="2.4"/>
<path d="M278,209 L336,209" stroke="#a9c5e1" stroke-width="3"/>
<ellipse cx="287.3" cy="305.5" rx="11.6" ry="21.7" fill="#fdf3e6" stroke="#27313d" stroke-width="2"/>
<ellipse cx="290" cy="302" rx="5.6" ry="13.5" fill="#27313d"/>
<path d="M285,293 L290,296 L286,299Z" fill="#fbf2dd"/>
<ellipse cx="324.5" cy="305.5" rx="11.6" ry="21.7" fill="#fdf3e6" stroke="#27313d" stroke-width="2"/>
<ellipse cx="327" cy="302" rx="5.6" ry="13.5" fill="#27313d"/>
<path d="M322,293 L327,296 L323,299Z" fill="#fbf2dd"/>
<ellipse cx="275.6" cy="331.9" rx="14" ry="11" fill="#eec0c0"/>
<ellipse cx="336.9" cy="331.9" rx="14" ry="11" fill="#eec0c0"/>
<path d="M282,343 Q305,362 330,344 M326,338 Q331,342 331,349" fill="none" stroke="#27313d" stroke-width="2.4" stroke-linecap="round"/>
<rect x="255.5" y="381.5" width="102.4" height="37.2" rx="18.6" fill="#fa7691" stroke="#27313d" stroke-width="2.4"/>
<text x="306.6" y="407.9" text-anchor="middle" font-family="Liberation Sans" font-weight="bold" font-size="22.5" fill="#fbf2dd" textLength="80.7" lengthAdjust="spacingAndGlyphs">MILK</text>
<rect x="0" y="464" width="439.1" height="156.5" fill="#fe7a15"/>
<text x="38.2" y="516.5" font-family="Liberation Sans" font-size="44.5" fill="#fdf0dc" textLength="135.5" lengthAdjust="spacingAndGlyphs">HAPPY</text>
<text x="37.7" y="576.4" font-family="Liberation Sans" font-size="58.6" fill="#fdf0dc" textLength="256.7" lengthAdjust="spacingAndGlyphs">CARTOON</text>
<rect x="251.7" y="494" width="3" height="33.7" fill="#fdf0dc"/>
<text x="271.3" y="507.1" font-family="Liberation Sans" font-weight="bold" font-size="16" fill="#fdf0dc" textLength="104.4" lengthAdjust="spacingAndGlyphs">LOREM IPSUM</text>
<text x="271.3" y="526" font-family="Liberation Sans" font-weight="bold" font-size="16" fill="#fdf0dc" textLength="127" lengthAdjust="spacingAndGlyphs">DOLOR SIT AMET</text>
</g></svg>
<svg style="left:1345px;top:337.9px" width="439.1" height="620.5" viewBox="0 0 439.1 620.5"><defs><clipPath id="c1"><rect width="439.1" height="620.5"/></clipPath></defs><g clip-path="url(#c1)">
<rect width="439.1" height="620.5" fill="#fbf2dd"/>
<circle cx="115" cy="30" r="540" fill="#a9c5e1" stroke="#27313d" stroke-width="1.3"/>
<circle cx="155" cy="42" r="440" fill="#eec0c0" stroke="#27313d" stroke-width="1.3"/>
<circle cx="155" cy="25.5" r="356" fill="#fa7691" stroke="#27313d" stroke-width="1.3"/>
<rect x="0" y="0" width="439.1" height="168" fill="#e23c5e"/>
<path d="M44.3,208.5 H115.3" stroke="#fbf2dd" stroke-width="3.3" stroke-linecap="round"/>
<text x="44.2" y="235.4" font-family="Liberation Sans" font-weight="bold" font-size="15" fill="#fbf2dd" textLength="95.1" lengthAdjust="spacingAndGlyphs">LOREM IPSUM</text>
<text x="44.2" y="253" font-family="Liberation Sans" font-weight="bold" font-size="15" fill="#fbf2dd" textLength="72.8" lengthAdjust="spacingAndGlyphs">DOLOR SIT</text>
<text x="44.2" y="270.6" font-family="Liberation Sans" font-weight="bold" font-size="15" fill="#fbf2dd" textLength="38.7" lengthAdjust="spacingAndGlyphs">AMET</text>
<path d="M86,339.8 Q86,328 96,326 Q104,326 106.7,322 Q109,312 117,317 Q124,320 129.4,307 Q133,299 143.9,305 Q150,306 152.2,296 Q156,292 164.6,297.4" fill="none" stroke="#4579ad" stroke-width="7" stroke-linecap="round" stroke-linejoin="round"/>
<path d="M-4,428 Q8,420 16,431 Q24,414 38,422 Q46,408 56,417 Q62,405 69,407" fill="none" stroke="#fbf2dd" stroke-width="7" stroke-linecap="round" stroke-linejoin="round"/>
<path d="M171.51,379.1L172.61,380.67L173.44,382.35L173.85,384.07L173.75,385.75L173.11,387.31L172,388.69L170.52,389.84L168.85,390.78L169.15,392.67L169.18,394.54L168.8,396.27L167.98,397.74L166.72,398.87L165.12,399.62L163.29,400.02L161.38,400.14L160.83,401.98L160.04,403.68L158.95,405.07L157.57,406.04L155.96,406.51L154.19,406.5L152.37,406.06L150.59,405.34L149.3,406.76L147.85,407.94L146.26,408.73L144.6,409L142.94,408.73L141.35,407.94L139.9,406.76L138.61,405.34L136.83,406.06L135.01,406.5L133.24,406.51L131.63,406.04L130.25,405.07L129.16,403.68L128.37,401.98L127.82,400.14L125.91,400.02L124.08,399.62L122.48,398.87L121.22,397.74L120.4,396.27L120.02,394.54L120.05,392.67L120.35,390.78L118.68,389.84L117.2,388.69L116.09,387.31L115.45,385.75L115.35,384.07L115.76,382.35L116.59,380.67L117.69,379.1L116.59,377.53L115.76,375.85L115.35,374.13L115.45,372.45L116.09,370.89L117.2,369.51L118.68,368.36L120.35,367.42L120.05,365.53L120.02,363.66L120.4,361.93L121.22,360.46L122.48,359.33L124.08,358.58L125.91,358.18L127.82,358.06L128.37,356.22L129.16,354.52L130.25,353.13L131.63,352.16L133.24,351.69L135.01,351.7L136.83,352.14L138.61,352.86L139.9,351.44L141.35,350.26L142.94,349.47L144.6,349.2L146.26,349.47L147.85,350.26L149.3,351.44L150.59,352.86L152.37,352.14L154.19,351.7L155.96,351.69L157.57,352.16L158.95,353.13L160.04,354.52L160.83,356.22L161.38,358.06L163.29,358.18L165.12,358.58L166.72,359.33L167.98,360.46L168.8,361.93L169.18,363.66L169.15,365.53L168.85,367.42L170.52,368.36L172,369.51L173.11,370.89L173.75,372.45L173.85,374.13L173.44,375.85L172.61,377.53L171.51,379.1Z" fill="#4579ad"/><path d="M175.51,375.1L176.61,376.67L177.44,378.35L177.85,380.07L177.75,381.75L177.11,383.31L176,384.69L174.52,385.84L172.85,386.78L173.15,388.67L173.18,390.54L172.8,392.27L171.98,393.74L170.72,394.87L169.12,395.62L167.29,396.02L165.38,396.14L164.83,397.98L164.04,399.68L162.95,401.07L161.57,402.04L159.96,402.51L158.19,402.5L156.37,402.06L154.59,401.34L153.3,402.76L151.85,403.94L150.26,404.73L148.6,405L146.94,404.73L145.35,403.94L143.9,402.76L142.61,401.34L140.83,402.06L139.01,402.5L137.24,402.51L135.63,402.04L134.25,401.07L133.16,399.68L132.37,397.98L131.82,396.14L129.91,396.02L128.08,395.62L126.48,394.87L125.22,393.74L124.4,392.27L124.02,390.54L124.05,388.67L124.35,386.78L122.68,385.84L121.2,384.69L120.09,383.31L119.45,381.75L119.35,380.07L119.76,378.35L120.59,376.67L121.69,375.1L120.59,373.53L119.76,371.85L119.35,370.13L119.45,368.45L120.09,366.89L121.2,365.51L122.68,364.36L124.35,363.42L124.05,361.53L124.02,359.66L124.4,357.93L125.22,356.46L126.48,355.33L128.08,354.58L129.91,354.18L131.82,354.06L132.37,352.22L133.16,350.52L134.25,349.13L135.63,348.16L137.24,347.69L139.01,347.7L140.83,348.14L142.61,348.86L143.9,347.44L145.35,346.26L146.94,345.47L148.6,345.2L150.26,345.47L151.85,346.26L153.3,347.44L154.59,348.86L156.37,348.14L158.19,347.7L159.96,347.69L161.57,348.16L162.95,349.13L164.04,350.52L164.83,352.22L165.38,354.06L167.29,354.18L169.12,354.58L170.72,355.33L171.98,356.46L172.8,357.93L173.18,359.66L173.15,361.53L172.85,363.42L174.52,364.36L176,365.51L177.11,366.89L177.75,368.45L177.85,370.13L177.44,371.85L176.61,373.53L175.51,375.1Z" fill="#eec0c0" stroke="#27313d" stroke-width="1.5"/><circle cx="148.6" cy="375.1" r="21.6" fill="none" stroke="#e23c5e" stroke-width="3.89"/><circle cx="148.6" cy="375.1" r="12.8" fill="none" stroke="#e23c5e" stroke-width="3.89"/>
<path d="M192.78,462L193.6,463.17L194.21,464.41L194.52,465.69L194.44,466.94L193.97,468.1L193.14,469.12L192.04,469.97L190.8,470.67L191.03,472.08L191.05,473.47L190.77,474.75L190.16,475.84L189.23,476.68L188.04,477.24L186.68,477.53L185.26,477.62L184.85,478.99L184.27,480.25L183.46,481.28L182.43,482L181.23,482.35L179.92,482.34L178.57,482.02L177.25,481.48L176.29,482.54L175.21,483.41L174.04,484L172.8,484.2L171.56,484L170.39,483.41L169.31,482.54L168.35,481.48L167.03,482.02L165.68,482.34L164.37,482.35L163.17,482L162.14,481.28L161.33,480.25L160.75,478.99L160.34,477.62L158.92,477.53L157.56,477.24L156.37,476.68L155.44,475.84L154.83,474.75L154.55,473.47L154.57,472.08L154.8,470.67L153.56,469.97L152.46,469.12L151.63,468.1L151.16,466.94L151.08,465.69L151.39,464.41L152,463.17L152.82,462L152,460.83L151.39,459.59L151.08,458.31L151.16,457.06L151.63,455.9L152.46,454.88L153.56,454.03L154.8,453.33L154.57,451.92L154.55,450.53L154.83,449.25L155.44,448.16L156.37,447.32L157.56,446.76L158.92,446.47L160.34,446.38L160.75,445.01L161.33,443.75L162.14,442.72L163.17,442L164.37,441.65L165.68,441.66L167.03,441.98L168.35,442.52L169.31,441.46L170.39,440.59L171.56,440L172.8,439.8L174.04,440L175.21,440.59L176.29,441.46L177.25,442.52L178.57,441.98L179.92,441.66L181.23,441.65L182.43,442L183.46,442.72L184.27,443.75L184.85,445.01L185.26,446.38L186.68,446.47L188.04,446.76L189.23,447.32L190.16,448.16L190.77,449.25L191.05,450.53L191.03,451.92L190.8,453.33L192.04,454.03L193.14,454.88L193.97,455.9L194.44,457.06L194.52,458.31L194.21,459.59L193.6,460.83L192.78,462Z" fill="#4579ad"/><path d="M196.78,458L197.6,459.17L198.21,460.41L198.52,461.69L198.44,462.94L197.97,464.1L197.14,465.12L196.04,465.97L194.8,466.67L195.03,468.08L195.05,469.47L194.77,470.75L194.16,471.84L193.23,472.68L192.04,473.24L190.68,473.53L189.26,473.62L188.85,474.99L188.27,476.25L187.46,477.28L186.43,478L185.23,478.35L183.92,478.34L182.57,478.02L181.25,477.48L180.29,478.54L179.21,479.41L178.04,480L176.8,480.2L175.56,480L174.39,479.41L173.31,478.54L172.35,477.48L171.03,478.02L169.68,478.34L168.37,478.35L167.17,478L166.14,477.28L165.33,476.25L164.75,474.99L164.34,473.62L162.92,473.53L161.56,473.24L160.37,472.68L159.44,471.84L158.83,470.75L158.55,469.47L158.57,468.08L158.8,466.67L157.56,465.97L156.46,465.12L155.63,464.1L155.16,462.94L155.08,461.69L155.39,460.41L156,459.17L156.82,458L156,456.83L155.39,455.59L155.08,454.31L155.16,453.06L155.63,451.9L156.46,450.88L157.56,450.03L158.8,449.33L158.57,447.92L158.55,446.53L158.83,445.25L159.44,444.16L160.37,443.32L161.56,442.76L162.92,442.47L164.34,442.38L164.75,441.01L165.33,439.75L166.14,438.72L167.17,438L168.37,437.65L169.68,437.66L171.03,437.98L172.35,438.52L173.31,437.46L174.39,436.59L175.56,436L176.8,435.8L178.04,436L179.21,436.59L180.29,437.46L181.25,438.52L182.57,437.98L183.92,437.66L185.23,437.65L186.43,438L187.46,438.72L188.27,439.75L188.85,441.01L189.26,442.38L190.68,442.47L192.04,442.76L193.23,443.32L194.16,444.16L194.77,445.25L195.05,446.53L195.03,447.92L194.8,449.33L196.04,450.03L197.14,450.88L197.97,451.9L198.44,453.06L198.52,454.31L198.21,455.59L197.6,456.83L196.78,458Z" fill="#eec0c0" stroke="#27313d" stroke-width="1.5"/><circle cx="176.8" cy="458" r="16" fill="none" stroke="#e23c5e" stroke-width="2.89"/><circle cx="176.8" cy="458" r="9.5" fill="none" stroke="#e23c5e" stroke-width="2.89"/>
<path d="M38.14,501.62L40.72,497.08L43.75,493.15L47.26,490.33L51.15,488.96L55.26,489.2L59.41,490.94L63.41,493.88L67.15,497.53L71.06,494.07L75.21,491.34L79.44,489.81L83.56,489.78L87.38,491.34L90.73,494.33L93.57,498.41L95.92,503.08L100.74,501.08L105.55,499.84L110.05,499.77L113.95,501.08L117.06,503.8L119.26,507.72L120.62,512.49L121.32,517.67L126.54,517.35L131.49,517.74L135.76,519.13L139.03,521.64L141.08,525.21L141.9,529.64L141.63,534.59L140.61,539.72L145.65,541.11L150.2,543.08L153.8,545.79L156.07,549.22L156.86,553.27L156.19,557.72L154.32,562.32L151.7,566.84L156.02,569.79L159.68,573.14L162.2,576.86L163.24,580.85L162.66,584.93L160.59,588.92L157.33,592.66L153.38,596.09L156.51,600.28L158.88,604.63L160.06,608.98L159.74,613.08L157.88,616.76L154.62,619.86L150.32,622.34L145.47,624.3L147.07,629.27L147.9,634.17L147.6,638.66L145.97,642.44L143.02,645.31L138.93,647.18L134.05,648.14L128.84,648.41L128.73,653.64L127.93,658.54L126.19,662.68L123.42,665.73L119.69,667.49L115.21,667.93L110.29,667.25L105.27,665.82L103.47,670.72L101.12,675.1L98.13,678.46L94.52,680.44L90.42,680.89L86.05,679.85L81.61,677.62L77.33,674.63L74.03,678.68L70.39,682.06L66.47,684.26L62.41,684.97L58.39,684.06L54.59,681.66L51.12,678.11L48.04,673.89L43.61,676.65L39.07,678.67L34.64,679.48L30.57,678.83L27.07,676.66L24.25,673.16L22.13,668.67L20.58,663.68L15.49,664.86L10.54,665.28L6.09,664.62L2.46,662.68L-0.16,659.49L-1.69,655.26L-2.24,650.33L-2.08,645.1L-7.28,644.57L-12.1,643.36L-16.09,641.29L-18.9,638.27L-20.33,634.41L-20.4,629.92L-19.32,625.07L-17.48,620.18L-22.22,617.98L-26.39,615.28L-29.49,612.02L-31.17,608.26L-31.27,604.14L-29.88,599.86L-27.28,595.63L-23.95,591.61L-27.72,587.99L-30.79,584.08L-32.66,579.99L-33.03,575.89L-31.79,571.96L-29.08,568.37L-25.25,565.21L-20.8,562.48L-23.19,557.83L-24.82,553.14L-25.26,548.67L-24.28,544.67L-21.83,541.35L-18.1,538.83L-13.46,537.09L-8.35,535.96L-9.11,530.78L-9.13,525.82L-8.09,521.44L-5.86,517.98L-2.47,515.64L1.87,514.46L6.83,514.32L12.03,514.91L12.99,509.77L14.59,505.07L16.99,501.27L20.22,498.72L24.19,497.6L28.68,497.9L33.42,499.38L38.14,501.62Z" fill="#e6a337" stroke="#27313d" stroke-width="2.6"/>
<circle cx="64.9" cy="586.5" r="66.2" fill="none" stroke="#fbf2dd" stroke-width="13.5"/>
<circle cx="64.9" cy="586.5" r="42.5" fill="none" stroke="#fbf2dd" stroke-width="13.5"/>
<path d="M196,240 Q186,265 196,290 M196,305 Q186,320 196,340" fill="none" stroke="#4579ad" stroke-width="7"/>
<path d="M355.2,-56.5L365.54,-40.48L381.22,-51.32L384.65,-32.57L403.28,-36.58L399.27,-17.95L418.02,-14.52L407.18,1.16L423.2,11.5L407.18,21.84L418.02,37.52L399.27,40.95L403.28,59.58L384.65,55.57L381.22,74.32L365.54,63.48L355.2,79.5L344.86,63.48L329.18,74.32L325.75,55.57L307.12,59.58L311.13,40.95L292.38,37.52L303.22,21.84L287.2,11.5L303.22,1.16L292.38,-14.52L311.13,-17.95L307.12,-36.58L325.75,-32.57L329.18,-51.32L344.86,-40.48Z" fill="#fed86f"/>
<text x="353.4" y="23.1" text-anchor="middle" font-family="Liberation Sans" font-size="32" fill="#3c6da6" textLength="33.2" lengthAdjust="spacingAndGlyphs">18</text>
<text x="359.5" y="48.5" text-anchor="middle" font-family="Liberation Sans" font-weight="bold" font-size="16" fill="#27313d" textLength="49.8" lengthAdjust="spacingAndGlyphs">Edition</text>
<text x="40.4" y="69.1" font-family="Liberation Sans" font-size="45" fill="#fdf0dc" textLength="133.8" lengthAdjust="spacingAndGlyphs">HAPPY</text>
<text x="40.2" y="127" font-family="Liberation Sans" font-size="57.9" fill="#fdf0dc" textLength="254" lengthAdjust="spacingAndGlyphs">CARTOON</text>
</g></svg>
<div class="a" style="left:1352px;top:347.3px;width:440px;height:622px;border:2px solid #4b7bf5"></div>
<svg style="left:0;top:0;position:absolute" width="2079" height="1257">
<rect x="853.3" y="337.9" width="439.1" height="620.5" fill="none" stroke="#5f86ea" stroke-width="1.3"/>
<rect x="849.5" y="334.1" width="7.6" height="7.6" fill="#fff" stroke="#4b7bf5" stroke-width="1"/>
<rect x="1288.6" y="334.1" width="7.6" height="7.6" fill="#fff" stroke="#4b7bf5" stroke-width="1"/>
<rect x="849.5" y="954.6" width="7.6" height="7.6" fill="#fff" stroke="#4b7bf5" stroke-width="1"/>
<rect x="1288.6" y="954.6" width="7.6" height="7.6" fill="#fff" stroke="#4b7bf5" stroke-width="1"/>
<path d="M1072.8 958.4V968" stroke="#4b7bf5" stroke-width="1"/>
</svg>
<div class="a" style="left:1017px;top:967.5px;width:111.5px;height:20.5px;border-radius:4px;background:#4b7bf5"></div>
<div class="t" style="left:1017px;top:971.5px;width:111.5px;text-align:center;font-size:13px;color:#fff;letter-spacing:0.7px">312.03 × 441.31</div>
<div class="a" style="left:1538px;top:410.6px;width:270px;height:641px;background:#fff;border-radius:8px;box-shadow:0 2px 14px rgba(0,0,0,0.16),0 0 0 0.5px rgba(0,0,0,0.06);overflow:hidden">
  <div class="t" style="left:18px;top:12.8px;font-size:13.6px;color:#1a1a1a;font-weight:bold">颜色</div>
  <svg style="left:211px;top:12px" width="12" height="16" viewBox="0 0 12 16"><path d="M6 1.2C4 4.6 1.6 7.5 1.6 10.4A4.4 4.4 0 0 0 10.4 10.4C10.4 7.5 8 4.6 6 1.2Z" fill="none" stroke="#222" stroke-width="1.4" stroke-linejoin="round"/></svg>
  <svg style="left:243.5px;top:13.5px" width="13" height="13" viewBox="0 0 13 13"><path d="M1 1L12 12M12 1L1 12" stroke="#222" stroke-width="1.5"/></svg>
  <div class="a" style="left:0;top:40.4px;width:270px;height:1px;background:#e8e8e8"></div>
  <div class="a" style="left:12px;top:52.4px;width:247px;height:30.5px;background:#f5f5f5;border-radius:5px"></div>
  <div class="a" style="left:13px;top:54.4px;width:49px;height:26.7px;background:#fff;border-radius:4px;box-shadow:0 0.5px 2px rgba(0,0,0,0.18)"></div>
  <div class="a" style="left:28.5px;top:59px;width:18px;height:18px;border:1.2px solid #888;border-radius:2px;background:#fff"></div>
  <div class="a" style="left:77px;top:59px;width:18px;height:18px;border-radius:2px;background:linear-gradient(180deg,#e6e6e6,#9a9a9a)"></div>
  <div class="a" style="left:125px;top:59px;width:18px;height:18px;border-radius:50%;background:radial-gradient(circle at 50% 45%,#eee 0%,#bbb 45%,#888 100%)"></div>
  <div class="a" style="left:173.5px;top:59px;width:18px;height:18px;border-radius:50%;background:conic-gradient(#777 0deg,#ddd 90deg,#c8c8c8 180deg,#aaa 270deg,#ddd 360deg)"></div>
  <svg style="left:222px;top:59px" width="18" height="18" viewBox="0 0 18 18"><rect width="18" height="18" rx="2" fill="#eee"/><path d="M0 0H4.5V4.5H0ZM9 0H13.5V4.5H9ZM4.5 4.5H9V9H4.5ZM13.5 4.5H18V9H13.5ZM0 9H4.5V13.5H0ZM9 9H13.5V13.5H9ZM4.5 13.5H9V18H4.5ZM13.5 13.5H18V18H13.5Z" fill="#888"/></svg>
  <div class="a" style="left:0;top:96px;width:270px;height:247px;background:linear-gradient(to top,#000,rgba(0,0,0,0)),linear-gradient(to right,#fff,#ff8400)"></div>
  <div class="a" style="left:236.3px;top:89.6px;width:13.5px;height:13.5px;border-radius:50%;border:2.2px solid #fff;box-shadow:0 0 0 0.6px rgba(0,0,0,0.35),inset 0 0 0 0.6px rgba(0,0,0,0.3)"></div>
  <svg style="left:18.5px;top:363.5px" width="17" height="17" viewBox="0 0 17 17"><path d="M10.5 4.5L2.3 12.7L1.6 15.4L4.3 14.7L12.5 6.5" fill="none" stroke="#111" stroke-width="1.4" stroke-linejoin="round"/><path d="M9.2 3.2L13.8 7.8M11.2 5.2L14.3 2.1A1.5 1.5 0 0 1 16.4 4.2L13.3 7.3" fill="none" stroke="#111" stroke-width="1.6"/><path d="M12.8 1.8L15.8 4.8L13.3 7.3L10.3 4.3Z" fill="#111"/></svg>
  <div class="a" style="left:46.7px;top:356.2px;width:32px;height:31px;border-radius:5px;overflow:hidden;background:linear-gradient(#000 50%,#ff8d1a 50%)"></div>
  <div class="a" style="left:90px;top:352.2px;width:162px;height:16px;border-radius:8px;background:linear-gradient(to right,#f00 4.8%,#ff0 19.5%,#00b400 34.3%,#00eeff 49.1%,#000080 63.7%,#ff00c8 79.2%,#f00 92.9%)"></div>
  <div class="a" style="left:103.2px;top:353.2px;width:13.5px;height:14.5px;border-radius:50%;background:#ff8000;border:2.4px solid #fff;box-shadow:0 0 1px rgba(0,0,0,0.4)"></div>
  <div class="a" style="left:90px;top:375.9px;width:162px;height:14px;border-radius:7px;background:linear-gradient(to right,rgba(255,141,26,0),#ff8d1a),repeating-conic-gradient(#ddd 0 25%,#fff 0 50%) 0 0/11px 11px"></div>
  <div class="a" style="left:236.3px;top:375.4px;width:15px;height:15px;border-radius:50%;background:#ff8d1a;border:2.4px solid #fff;box-shadow:0 0 1px rgba(0,0,0,0.4)"></div>
  <div class="t" style="left:18.5px;top:413.5px;font-size:13px;color:#888">R</div>
  <div class="t" style="left:72px;top:413.5px;font-size:13px;color:#888">G</div>
  <div class="t" style="left:126px;top:413.5px;font-size:13px;color:#888">B</div>
  <div class="t" style="left:180px;top:413.5px;font-size:13px;color:#888">A</div>
  <div class="inp" style="left:11.2px;top:435.4px;width:49.3px;height:31.7px"></div>
  <div class="inp" style="left:65.2px;top:435.4px;width:49.3px;height:31.7px"></div>
  <div class="inp" style="left:119.2px;top:435.4px;width:49.3px;height:31.7px"></div>
  <div class="inp" style="left:173.2px;top:435.4px;width:49.3px;height:31.7px"></div>
  <div class="t" style="left:18.5px;top:443.5px;font-size:14px;color:#222">255</div>
  <div class="t" style="left:72px;top:443.5px;font-size:14px;color:#222">141</div>
  <div class="t" style="left:126px;top:443.5px;font-size:14px;color:#222">26</div>
  <div class="t" style="left:179.5px;top:443.5px;font-size:14px;color:#222">100</div>
  <div class="t" style="left:204.5px;top:443.5px;font-size:13px;color:#999">%</div>
  <svg style="left:237.5px;top:442.5px" width="10" height="17" viewBox="0 0 10 17"><path d="M1 5.5L5 1.5L9 5.5M1 11.5L5 15.5L9 11.5" fill="none" stroke="#222" stroke-width="1.3"/></svg>
  <div class="a" style="left:15.9px;top:483.4px;width:22px;height:21.7px;border-radius:3px;background:#fff;box-shadow:inset 0 0 0 1px #e0e0e0"></div>
  <div class="a" style="left:42.9px;top:483.4px;width:22px;height:21.7px;border-radius:3px;background:#e3e3e3;box-shadow:inset 0 0 0 0.6px rgba(0,0,0,0.08)"></div>
  <div class="a" style="left:69.9px;top:483.4px;width:22px;height:21.7px;border-radius:3px;background:#a3a3a3;box-shadow:inset 0 0 0 0.6px rgba(0,0,0,0.08)"></div>
  <div class="a" style="left:96.9px;top:483.4px;width:22px;height:21.7px;border-radius:3px;background:#7f7f7f;box-shadow:inset 0 0 0 0.6px rgba(0,0,0,0.08)"></div>
  <div class="a" style="left:123.9px;top:483.4px;width:22px;height:21.7px;border-radius:3px;background:#383838;box-shadow:inset 0 0 0 0.6px rgba(0,0,0,0.08)"></div>
  <div class="a" style="left:150.9px;top:483.4px;width:22px;height:21.7px;border-radius:3px;background:#000;box-shadow:inset 0 0 0 0.6px rgba(0,0,0,0.08)"></div>
  <div class="a" style="left:177.9px;top:483.4px;width:22px;height:21.7px;border-radius:3px;background:#ff5533;box-shadow:inset 0 0 0 0.6px rgba(0,0,0,0.08)"></div>
  <div class="a" style="left:204.9px;top:483.4px;width:22px;height:21.7px;border-radius:3px;background:#d42e2e;box-shadow:inset 0 0 0 0.6px rgba(0,0,0,0.08)"></div>
  <div class="a" style="left:231.9px;top:483.4px;width:22px;height:21.7px;border-radius:3px;background:#e03c66;box-shadow:inset 0 0 0 0.6px rgba(0,0,0,0.08)"></div>
  <div class="a" style="left:15.9px;top:510.3px;width:22px;height:21.7px;border-radius:3px;background:#ffe534"></div>
  <div class="a" style="left:42.9px;top:510.3px;width:22px;height:21.7px;border-radius:3px;background:#ffc200"></div>
  <div class="a" style="left:69.9px;top:510.3px;width:22px;height:21.7px;border-radius:3px;background:#ff8d1a"></div>
  <div class="a" style="left:96.9px;top:510.3px;width:22px;height:21.7px;border-radius:3px;background:#a3d442"></div>
  <div class="a" style="left:123.9px;top:510.3px;width:22px;height:21.7px;border-radius:3px;background:#48cf7f"></div>
  <div class="a" style="left:150.9px;top:510.3px;width:22px;height:21.7px;border-radius:3px;background:#00b8a9"></div>
  <div class="a" style="left:177.9px;top:510.3px;width:22px;height:21.7px;border-radius:3px;background:#2b80e0"></div>
  <div class="a" style="left:204.9px;top:510.3px;width:22px;height:21.7px;border-radius:3px;background:#7a4be0"></div>
  <div class="a" style="left:231.9px;top:510.3px;width:22px;height:21.7px;border-radius:3px;background:#a933c4"></div>
  <div class="a" style="left:15.9px;top:557.4px;width:22px;height:21.7px;border-radius:3px;background:#ff8d1a"></div>
  <div class="a" style="left:42.9px;top:557.4px;width:22px;height:21.7px;border-radius:3px;background:#d42222"></div>
  <div class="a" style="left:69.9px;top:557.4px;width:22px;height:21.7px;border-radius:3px;background:#cc7272"></div>
  <div class="a" style="left:11.5px;top:543.8px;width:247px;height:1px;background:#e8e8e8"></div>
  <div class="a" style="left:11.5px;top:593.4px;width:247px;height:1px;background:#e8e8e8"></div>
  <div class="a" style="left:15.4px;top:603.8px;width:23.4px;height:24.4px;border-radius:3px;border:1px solid #e3e3e3;background:#fff"></div>
  <svg style="left:21.1px;top:610px" width="12" height="12" viewBox="0 0 12 12"><path d="M6 0V12M0 6H12" stroke="#222" stroke-width="1.5"/></svg>
</div>

<div class="a" style="left:1419px;top:1199.7px;width:371px;height:40px;background:#fff;border-radius:7px;box-shadow:0 2px 8px rgba(0,0,0,0.12)"></div>
<div class="t" style="left:1431.5px;top:1211.5px;font-size:16px;letter-spacing:-0.2px;color:#222">文件已升级完成，如有疑问，<span style="text-decoration:underline">联系我们</span></div>
<div class="t" style="left:1713px;top:1211.5px;font-size:15.6px;color:#1a8cff">我知道了</div>


<!-- TOP BAR -->
<div id="top" class="a">
  <svg style="left:14px;top:16px" width="17" height="14" viewBox="0 0 17 14"><path d="M0 1.2H16M0 7H16M0 12.8H16" stroke="#111" stroke-width="1.8"/></svg>
  <div class="t" style="left:50px;top:16px;font-size:14.6px;color:#888">个人文件 /</div>
  <div class="t" style="left:122px;top:16px;font-size:15px;letter-spacing:-0.3px;color:#1a1a1a">卡通复古食物小海报</div>
  <svg style="left:258px;top:21px" width="10" height="6" viewBox="0 0 10 6"><path d="M0.8 0.8L5 5L9.2 0.8" fill="none" stroke="#333" stroke-width="1.2"/></svg>
  <div class="a" style="left:290px;top:12px;width:1px;height:24px;background:#e3e3e3"></div>
  <div class="t" style="left:309px;top:16.5px;font-size:13.6px;color:#222">125%</div>
  <svg style="left:347.5px;top:21px" width="10" height="6" viewBox="0 0 10 6"><path d="M0.8 0.8L5 5L9.2 0.8" fill="none" stroke="#333" stroke-width="1.2"/></svg>
  <svg style="left:926px;top:14px" width="19" height="19" viewBox="0 0 19 19"><path d="M9.5 0.9L18.1 9.5L9.5 18.1L0.9 9.5Z" fill="none" stroke="#222" stroke-width="1.5" stroke-linejoin="round"/><circle cx="9.5" cy="9.5" r="2.7" fill="none" stroke="#222" stroke-width="1.4"/></svg>
  <svg style="left:968px;top:14px" width="18" height="18" viewBox="0 0 18 18"><path d="M9 1.2A7.8 7.8 0 0 0 9 16.8C11.6 14 11.6 4 9 1.2Z" fill="#b8b8b8"/><circle cx="9" cy="9" r="7.8" fill="none" stroke="#222" stroke-width="1.5"/></svg>
  <svg style="left:995px;top:20px" width="10" height="6" viewBox="0 0 10 6"><path d="M0.8 1L5 5L9.2 1" fill="none" stroke="#333" stroke-width="1.2"/></svg>
  <svg style="left:1030px;top:14.5px" width="17" height="17" viewBox="0 0 17 17"><path d="M8 1H1.5A0.8 0.8 0 0 0 0.8 1.8V15.2A0.8 0.8 0 0 0 1.5 16H15.2A0.8 0.8 0 0 0 16 15.2V9" fill="none" stroke="#222" stroke-width="1.5"/><path d="M3.5 13.5L15.5 1.5M10 1.2H15.8V7M3.3 8.5V13.7H8.5" fill="none" stroke="#222" stroke-width="1.5"/></svg>
  <svg style="left:1071px;top:14.5px" width="18" height="17" viewBox="0 0 18 17"><path d="M1.5 0.8H9A0.7 0.7 0 0 1 9.7 1.5V5.8H15.8A0.7 0.7 0 0 1 16.5 6.5V15.5A0.7 0.7 0 0 1 15.8 16.2H8.5A0.7 0.7 0 0 1 7.8 15.5V11H1.5A0.7 0.7 0 0 1 0.8 10.3V1.5A0.7 0.7 0 0 1 1.5 0.8Z" fill="#ccc" stroke="#222" stroke-width="1.5" stroke-linejoin="round"/></svg>
  <svg style="left:1098px;top:20px" width="10" height="6" viewBox="0 0 10 6"><path d="M0.8 1L5 5L9.2 1" fill="none" stroke="#333" stroke-width="1.2"/></svg>
  <svg style="left:1134px;top:14.5px" width="17" height="17" viewBox="0 0 17 17"><rect x="0.8" y="0.8" width="15.4" height="15.4" rx="1" fill="none" stroke="#222" stroke-width="1.5"/><rect x="4" y="4" width="9" height="9" fill="none" stroke="#222" stroke-width="1.5"/></svg>
  <div class="a" style="left:1681.5px;top:7.5px;width:27px;height:27px;border-radius:50%;background:#4c7ff5"></div>
  <div class="t" style="left:1688.5px;top:13px;font-size:15px;color:#fff;font-weight:bold">Q</div>
  <svg style="left:1721px;top:13px" width="20" height="20" viewBox="0 0 20 20"><path d="M0.8 16.5L6 0.8H8.5L13.5 15M3 10.5H10" fill="none" stroke="#111" stroke-width="2.2" stroke-linejoin="round"/><circle cx="15" cy="13" r="4.5" fill="#e5484d"/><path d="M15 10.5V13.5M15 14.8V15.6" stroke="#fff" stroke-width="1.4"/></svg>
  <div class="a" style="left:1756px;top:6px;width:66px;height:31px;border-radius:6px;background:#0a8cff"></div>
  <div class="t" style="left:1774.5px;top:13.5px;font-size:14.5px;color:#fff">分享</div>
  <div class="a" style="left:1835px;top:10px;width:1px;height:23px;background:#e3e3e3"></div>
  <svg style="left:1855.5px;top:14px" width="12" height="15" viewBox="0 0 12 15"><path d="M0.5 0.5L11.5 7.5L0.5 14.5Z" fill="#111"/></svg>
  <div class="a" style="left:1885.5px;top:6px;width:179.5px;height:31px;border-radius:6px;background:#f4f4f4"></div>
  <div class="a" style="left:1887px;top:7.7px;width:58px;height:27.6px;border-radius:5px;background:#fff;box-shadow:0 0 0 0.6px #ddd,0 1px 2px rgba(0,0,0,0.1)"></div>
  <div class="t" style="left:1902.5px;top:13.5px;font-size:14px;color:#111">设计</div>
  <div class="t" style="left:1960px;top:13.5px;font-size:14px;color:#888">原型</div>
  <div class="t" style="left:2019px;top:13.5px;font-size:14px;color:#888">标注</div>
</div>

<!-- LEFT TOOLBAR -->
<div id="ltool" class="a">
  <div class="a" style="left:5px;top:11px;width:34px;height:34px;background:#0a8cff;border-radius:6px"></div>
  <svg style="left:14px;top:20px" width="18" height="18" viewBox="0 0 18 18"><path d="M1.5 1.5L14.5 7.3L8.2 9L5 15.2Z" fill="none" stroke="#fff" stroke-width="1.3" stroke-linejoin="round"/><path d="M17 14V18H13Z" fill="#fff"/></svg>
  <svg style="left:14px;top:65px" width="17" height="17" viewBox="0 0 17 17"><path d="M5 0.5V16.5M12 0.5V16.5M0.5 5H16.5M0.5 12H16.5" stroke="#222" stroke-width="1.5"/></svg>
  <svg style="left:14px;top:111px" width="18" height="18" viewBox="0 0 18 18"><rect x="0.75" y="0.75" width="13.5" height="13.5" fill="none" stroke="#222" stroke-width="1.5"/><path d="M18.5 13.5V18.5H13.5Z" fill="#222"/></svg>
  <svg style="left:13px;top:154px" width="20" height="20" viewBox="0 0 20 20"><path d="M1 1L12 4.2L14.5 10L11 13.5L5.5 11.5Z" fill="none" stroke="#222" stroke-width="1.5" stroke-linejoin="round"/><path d="M1 1L7.5 7.5" stroke="#222" stroke-width="1.2"/><circle cx="7.8" cy="7.8" r="1.3" fill="#222"/><path d="M11.5 13L15 9.5L17 11.5L13.5 15Z" fill="none" stroke="#222" stroke-width="1.4"/><path d="M20 15.5V20H15.5Z" fill="#222"/></svg>
  <svg style="left:14px;top:199px" width="16" height="17" viewBox="0 0 16 17"><path d="M0.8 3.5V0.9H15.2V3.5M8 0.9V16.2M5.2 16.2H10.8" fill="none" stroke="#222" stroke-width="1.5"/></svg>
  <svg style="left:13px;top:244px" width="18" height="18" viewBox="0 0 18 18"><path d="M1 17C2 12 3 10 5.5 8.5L12.5 1.5L16.5 5.5L9.5 12.5C8 15 6 16 1 17Z" fill="none" stroke="#222" stroke-width="1.5" stroke-linejoin="round"/><path d="M1 17L7 11" stroke="#222" stroke-width="1.3"/></svg>
  <div class="a" style="left:9px;top:280px;width:27px;height:1px;background:#e3e3e3"></div>
  <svg style="left:14px;top:299px" width="17" height="16" viewBox="0 0 17 16"><path d="M0.8 0.8H16.2V11.5H7L3.5 15V11.5H0.8Z" fill="none" stroke="#222" stroke-width="1.5" stroke-linejoin="round"/></svg>
  <svg style="left:13px;top:344px" width="19" height="19" viewBox="0 0 19 19"><rect x="0.8" y="0.8" width="6.4" height="6.4" fill="none" stroke="#222" stroke-width="1.4"/><circle cx="14.5" cy="4" r="3.3" fill="none" stroke="#222" stroke-width="1.4"/><path d="M4 10.5V17.5M0.5 14H7.5" stroke="#222" stroke-width="1.4"/><path d="M14.5 10.2L18 13.8L14.5 17.4L11 13.8Z" fill="none" stroke="#222" stroke-width="1.4"/></svg>
  <svg style="left:13px;top:389px" width="19" height="19" viewBox="0 0 19 19"><circle cx="7.8" cy="7.8" r="6.4" fill="none" stroke="#222" stroke-width="1.6"/><path d="M12.5 12.5L17.8 17.8" stroke="#222" stroke-width="1.7"/></svg>
  <svg style="left:14px;top:1181px" width="17" height="4" viewBox="0 0 17 4"><circle cx="2" cy="2" r="1.7" fill="#111"/><circle cx="8.5" cy="2" r="1.7" fill="#111"/><circle cx="15" cy="2" r="1.7" fill="#111"/></svg>
</div>

<!-- LEFT PANEL -->
<div id="lpanel" class="a">
  <div class="t" style="left:12.5px;top:15.5px;font-size:15px !important;letter-spacing:-0.6px !important;color:#1a1a1a">图层</div>
  <div class="t" style="left:57.5px;top:15.5px;font-size:15px !important;letter-spacing:-0.6px !important;color:#888">组件</div>
  <div class="t" style="left:102.5px;top:15.5px;font-size:15px !important;letter-spacing:-0.6px !important;color:#888">资源</div>
  <div class="t" style="left:149px;top:16.5px;font-size:13.8px;color:#888">AI</div>
  <div class="a" style="left:165px;top:12px;width:41px;height:21.5px;border-radius:11px;background:#e3f1ff"></div>
  <div class="t" style="left:172px;top:16.5px;font-size:13.5px;color:#1a8cff">New</div>
  <div class="sep" style="left:0;top:44.5px;width:262px;background:#e6e6e6"></div>
  <div class="a" style="left:5px;top:43.5px;width:45px;height:2.2px;background:#2b2b2b"></div>
  <div class="t" style="left:11.5px;top:56.5px;font-size:14.6px !important;letter-spacing:0 !important;color:#888">页数：2</div>
  <svg style="left:209.5px;top:57.5px" width="13" height="13" viewBox="0 0 13 13"><path d="M6.5 0V13M0 6.5H13" stroke="#222" stroke-width="1.5"/></svg>
  <svg style="left:238.5px;top:60px" width="10" height="6" viewBox="0 0 10 6"><path d="M1 5L5 1L9 5" fill="none" stroke="#333" stroke-width="1.3"/></svg>
  <svg style="left:19.5px;top:95px" width="12" height="10" viewBox="0 0 12 10"><path d="M1 5L4.5 8.5L11 1.5" fill="none" stroke="#222" stroke-width="1.6"/></svg>
  <div class="t" style="left:39px;top:93px;font-size:14px;color:#1a1a1a">卡通复古食物小海报</div>
  <div class="t" style="left:39px;top:129px;font-size:14px;color:#1a1a1a">封面</div>
  <div class="sep" style="left:0;top:232px;width:262px;background:#e6e6e6"></div>
  <svg style="left:10.5px;top:245.5px" width="14" height="14" viewBox="0 0 14 14"><circle cx="6" cy="6" r="4.8" fill="none" stroke="#555" stroke-width="1.3"/><path d="M9.5 9.5L13 13" stroke="#555" stroke-width="1.4"/></svg>
  <svg style="left:30px;top:250px" width="9" height="6" viewBox="0 0 9 6"><path d="M0.8 1L4.5 4.8L8.2 1" fill="none" stroke="#555" stroke-width="1.2"/></svg>
  <div class="t" style="left:49.5px;top:246px;font-size:14px;color:#bbb">搜索</div>
  <svg style="left:237.5px;top:246px" width="10" height="11" viewBox="0 0 10 11"><path d="M1 5L5 1.2L9 5M1 10L5 6.2L9 10" fill="none" stroke="#333" stroke-width="1.2"/></svg>
  <svg style="left:12.5px;top:288px" width="6" height="4" viewBox="0 0 6 4"><path d="M0 0H6L3 4Z" fill="#888"/></svg>
  <svg style="left:27px;top:284.5px" width="13" height="13" viewBox="0 0 13 13"><path d="M2.5 0V13M10.5 0V13M0 2.5H13M0 10.5H13" stroke="#888" stroke-width="1.3"/><rect x="3.5" y="3.5" width="6" height="6" fill="none"/></svg>
  <div class="t" style="left:47.5px;top:284px;font-size:14px;color:#222;font-weight:bold">海报2</div>
  <div class="a" style="left:0;top:309px;width:257px;height:36px;background:#cce5fb"></div>
  <svg style="left:32.5px;top:323.5px" width="4" height="6" viewBox="0 0 4 6"><path d="M0 0V6L4 3Z" fill="#555"/></svg>
  <svg style="left:45.5px;top:320.5px" width="13" height="13" viewBox="0 0 13 13"><path d="M2.5 0V13M10.5 0V13M0 2.5H13M0 10.5H13" stroke="#222" stroke-width="1.3"/><rect x="3.5" y="3.5" width="6" height="6" fill="none"/></svg>
  <div class="t" style="left:65px;top:320px;font-size:14px;color:#222">组 126</div>
  <svg style="left:46.5px;top:356px" width="11" height="14" viewBox="0 0 11 14"><rect x="0.6" y="0.6" width="9.8" height="12.8" fill="none" stroke="#555" stroke-width="1.1"/></svg>
  <div class="t" style="left:65px;top:356px;font-size:14px;color:#222">矩形 10</div>
  <svg style="left:13.5px;top:396px" width="4" height="6" viewBox="0 0 4 6"><path d="M0 0V6L4 3Z" fill="#888"/></svg>
  <svg style="left:27px;top:392.5px" width="13" height="13" viewBox="0 0 13 13"><path d="M2.5 0V13M10.5 0V13M0 2.5H13M0 10.5H13" stroke="#888" stroke-width="1.3"/><rect x="3.5" y="3.5" width="6" height="6" fill="none"/></svg>
  <div class="t" style="left:47.5px;top:392px;font-size:14px;color:#222;font-weight:bold">海报3</div>
  <svg style="left:13.5px;top:432px" width="4" height="6" viewBox="0 0 4 6"><path d="M0 0V6L4 3Z" fill="#888"/></svg>
  <svg style="left:27px;top:428.5px" width="13" height="13" viewBox="0 0 13 13"><path d="M2.5 0V13M10.5 0V13M0 2.5H13M0 10.5H13" stroke="#888" stroke-width="1.3"/><rect x="3.5" y="3.5" width="6" height="6" fill="none"/></svg>
  <div class="t" style="left:47.5px;top:428px;font-size:14px;color:#222;font-weight:bold">海报1</div>
</div>

<!-- RIGHT PANEL -->
<div class="a" style="left:2078px;top:49px;width:1px;height:1208px;background:#c8c8c8;z-index:3"></div>
<div id="rpanel" class="a">
<div class="inp" style="left:11px;top:-11px;width:103.5px;height:33px"></div>
<div class="inp" style="left:11px;top:27px;width:103.5px;height:31px"></div>
<svg style="left:19px;top:-1px" width="15" height="15" viewBox="0 0 15 15"><path d="M12.5 4.5A6 6 0 1 0 13.2 9" fill="none" stroke="#666" stroke-width="1.2"/><path d="M13 1V5H9" fill="none" stroke="#666" stroke-width="1.2"/></svg>
<div class="t" style="left:47px;top:-1.5px;font-size:14px;color:#222">0</div>
<svg style="left:20px;top:36px" width="13" height="13" viewBox="0 0 13 13"><path d="M1 13V7A6 6 0 0 1 7 1H12" fill="none" stroke="#666" stroke-width="1.2"/></svg>
<div class="t" style="left:47px;top:34.5px;font-size:14px;color:#222">0</div>
<svg style="left:127px;top:0px" width="16" height="15" viewBox="0 0 16 15"><path d="M1.5 0V13H6" fill="none" stroke="#333" stroke-width="1.4"/><path d="M8 0V13H14V0" fill="none" stroke="#555" stroke-width="1" stroke-dasharray="1.5 1.5"/></svg>
<svg style="left:162px;top:-2px" width="18" height="17" viewBox="0 0 18 17"><path d="M1 1V8M17 1V8M1 6H17" fill="none" stroke="#333" stroke-width="1.4"/><path d="M1.5 8V15.5H16.5V8" fill="none" stroke="#555" stroke-width="1" stroke-dasharray="1.5 1.5"/></svg>
<svg style="left:126.5px;top:34.5px" width="17" height="17" viewBox="0 0 17 17"><path d="M1 5V2A1 1 0 0 1 2 1H5M12 1H15A1 1 0 0 1 16 2V5M16 12V15A1 1 0 0 1 15 16H12M5 16H2A1 1 0 0 1 1 15V12" fill="none" stroke="#222" stroke-width="1.5"/></svg>
<svg style="left:162.5px;top:41px" width="16" height="4" viewBox="0 0 16 4"><circle cx="2" cy="2" r="1.6" fill="#111"/><circle cx="8" cy="2" r="1.6" fill="#111"/><circle cx="14" cy="2" r="1.6" fill="#111"/></svg>
<div class="sep" style="left:0;top:72.5px;width:271px"></div>
<div class="t" style="left:18.5px;top:93.8px;font-size:14px;color:#1a1a1a;font-weight:bold">图层</div>
<div class="inp" style="left:11.5px;top:122.5px;width:102.79999999999995px;height:30.19999999999999px"></div>
<div class="t" style="left:18px;top:130.3px;font-size:14px;color:#222">正常</div>
<svg style="left:93px;top:135px" width="10" height="6" viewBox="0 0 10 6"><path d="M1 1L5 5L9 1" fill="none" stroke="#666" stroke-width="1.1"/></svg>
<div class="inp" style="left:119.5px;top:122.5px;width:67.09999999999991px;height:30.19999999999999px"></div>
<div class="t" style="left:126.5px;top:130.0px;font-size:14px;color:#222">100</div>
<div class="t" style="left:169px;top:130.3px;font-size:14px;color:#999">%</div>
<svg style="left:234.0px;top:131.5px" width="17" height="12" viewBox="0 0 17 12"><path d="M0.8 6C3 2.3 5.5 0.8 8.5 0.8S14 2.3 16.2 6C14 9.7 11.5 11.2 8.5 11.2S3 9.7 0.8 6Z" fill="none" stroke="#111" stroke-width="1.4"/><circle cx="8.5" cy="6" r="2.3" fill="#111"/></svg>
<div class="sep" style="left:0;top:165.5px;width:271px"></div>
<div class="t" style="left:18.5px;top:188.8px;font-size:14px;color:#777">自动布局</div>
<svg style="left:236.0px;top:189.5px" width="13" height="13" viewBox="0 0 13 13"><path d="M6.5 0V13M0 6.5H13" stroke="#666" stroke-width="1.4"/></svg>
<div class="sep" style="left:0;top:224.5px;width:271px"></div>
<div class="t" style="left:18.5px;top:246.8px;font-size:14px;color:#777">网格布局</div>
<svg style="left:236.0px;top:247.5px" width="13" height="13" viewBox="0 0 13 13"><path d="M6.5 0V13M0 6.5H13" stroke="#666" stroke-width="1.4"/></svg>
<div class="sep" style="left:0;top:282.5px;width:271px"></div>
<div class="t" style="left:18.5px;top:305.8px;font-size:14px;color:#1a1a1a;font-weight:bold">响应式调整</div>
<svg style="left:236.0px;top:312px" width="13" height="2" viewBox="0 0 13 2"><path d="M0 1H13" stroke="#333" stroke-width="1.5"/></svg>
<svg style="left:18px;top:332.5px" width="68" height="68" viewBox="0 0 68 68">
<rect x="0" y="0" width="68" height="68" fill="#f3f3f3"/>
<path d="M0 0L18 18M68 0L50 18M0 68L18 50M68 68L50 50" stroke="#fff" stroke-width="1.2"/>
<rect x="18" y="18" width="32" height="32" fill="#fff"/>
<path d="M34 26V42M26 34H42" stroke="#aaa" stroke-width="1"/>
<path d="M34 6V14M27 6H41" stroke="#222" stroke-width="1.6"/>
<path d="M34 54V62M27 62H41" stroke="#222" stroke-width="1.6"/>
<path d="M6 27V41M6 34H14" stroke="#222" stroke-width="1.6"/>
<path d="M62 27V41M54 34H62" stroke="#222" stroke-width="1.6"/>
</svg>
<svg style="left:109px;top:344px" width="15" height="9" viewBox="0 0 15 9"><path d="M0.8 0V9M14.2 0V9M0.8 4.5H14.2" stroke="#333" stroke-width="1.3"/></svg>
<div class="inp" style="left:133px;top:333.5px;width:125.5px;height:31.0px"></div>
<div class="t" style="left:139.5px;top:341.8px;font-size:14px;color:#222">左右间距固定</div>
<svg style="left:237.5px;top:346.5px" width="10" height="6" viewBox="0 0 10 6"><path d="M1 1L5 5L9 1" fill="none" stroke="#666" stroke-width="1.1"/></svg>
<svg style="left:112px;top:377px" width="9" height="15" viewBox="0 0 9 15"><path d="M0 0.8H9M0 14.2H9M4.5 0.8V14.2" stroke="#333" stroke-width="1.3"/></svg>
<div class="inp" style="left:133px;top:370px;width:125.5px;height:30.69999999999999px"></div>
<div class="t" style="left:139.5px;top:377.8px;font-size:14px;color:#222">上下间距固定</div>
<svg style="left:237.5px;top:382.5px" width="10" height="6" viewBox="0 0 10 6"><path d="M1 1L5 5L9 1" fill="none" stroke="#666" stroke-width="1.1"/></svg>
<div class="a" style="left:20px;top:415px;width:14px;height:14px;border:1.2px solid #444;border-radius:2.5px"></div>
<div class="t" style="left:43px;top:414.3px;font-size:14px;color:#333">滚动时保持固定位置</div>
<div class="sep" style="left:0;top:449px;width:271px"></div>
<div class="t" style="left:18px;top:471.8px;font-size:14px;color:#1a1a1a;font-weight:bold">填充</div>
<svg style="left:202px;top:474px" width="10" height="10" viewBox="0 0 10 10"><circle cx="1.8" cy="1.8" r="1.6" fill="#111"/><circle cx="8.2" cy="1.8" r="1.6" fill="#111"/><circle cx="1.8" cy="8.2" r="1.6" fill="#111"/><circle cx="8.2" cy="8.2" r="1.6" fill="#111"/></svg>
<svg style="left:236.19999999999982px;top:472.5px" width="13" height="13" viewBox="0 0 13 13"><path d="M6.5 0V13M0 6.5H13" stroke="#222" stroke-width="1.4"/></svg>
<div class="inp" style="left:11px;top:500px;width:103.59999999999991px;height:30.600000000000023px"></div>
<div class="a" style="left:19px;top:505.79999999999995px;width:19px;height:19px;border-radius:3px;background:#fff;box-shadow:inset 0 0 0 1px #e2e2e2"></div>
<div class="t" style="left:48.5px;top:508.0px;font-size:14px;color:#222">FFFFFF</div>
<div class="inp" style="left:119.40000000000009px;top:500px;width:67.59999999999991px;height:30.600000000000023px"></div>
<div class="t" style="left:126.5px;top:508.0px;font-size:14px;color:#222">100</div>
<div class="t" style="left:169px;top:508.3px;font-size:14px;color:#999">%</div>
<svg style="left:198.5px;top:509px" width="17" height="12" viewBox="0 0 17 12"><path d="M0.8 6C3 2.3 5.5 0.8 8.5 0.8S14 2.3 16.2 6C14 9.7 11.5 11.2 8.5 11.2S3 9.7 0.8 6Z" fill="none" stroke="#111" stroke-width="1.4"/><circle cx="8.5" cy="6" r="2.3" fill="#111"/></svg>
<svg style="left:236.19999999999982px;top:514px" width="13" height="2" viewBox="0 0 13 2"><path d="M0 1H13" stroke="#333" stroke-width="1.5"/></svg>
<div class="sep" style="left:0;top:544.5px;width:271px"></div>
<div class="t" style="left:18px;top:567.3px;font-size:14px;color:#1a1a1a;font-weight:bold">描边</div>
<svg style="left:163px;top:572px" width="16" height="4" viewBox="0 0 16 4"><circle cx="2" cy="2" r="1.6" fill="#111"/><circle cx="8" cy="2" r="1.6" fill="#111"/><circle cx="14" cy="2" r="1.6" fill="#111"/></svg>
<svg style="left:202px;top:569px" width="10" height="10" viewBox="0 0 10 10"><circle cx="1.8" cy="1.8" r="1.6" fill="#111"/><circle cx="8.2" cy="1.8" r="1.6" fill="#111"/><circle cx="1.8" cy="8.2" r="1.6" fill="#111"/><circle cx="8.2" cy="8.2" r="1.6" fill="#111"/></svg>
<svg style="left:236.19999999999982px;top:567.5px" width="13" height="13" viewBox="0 0 13 13"><path d="M6.5 0V13M0 6.5H13" stroke="#222" stroke-width="1.4"/></svg>
<div class="inp" style="left:11px;top:594px;width:67.40000000000009px;height:31px"></div>
<div class="a" style="left:19px;top:600.0px;width:19px;height:19px;border-radius:3px;background:#ff8d1a"></div>
<svg style="left:57.5px;top:607.5px" width="10" height="6" viewBox="0 0 10 6"><path d="M1 1L5 5L9 1" fill="none" stroke="#666" stroke-width="1.1"/></svg>
<div class="inp" style="left:82.79999999999995px;top:594px;width:104.20000000000005px;height:31px"></div>
<div class="t" style="left:92.29999999999995px;top:602.0px;font-size:14px;color:#222">FF8D1A</div>
<svg style="left:198.5px;top:604px" width="17" height="12" viewBox="0 0 17 12"><path d="M0.8 6C3 2.3 5.5 0.8 8.5 0.8S14 2.3 16.2 6C14 9.7 11.5 11.2 8.5 11.2S3 9.7 0.8 6Z" fill="none" stroke="#111" stroke-width="1.4"/><circle cx="8.5" cy="6" r="2.3" fill="#111"/></svg>
<svg style="left:236.19999999999982px;top:609px" width="13" height="2" viewBox="0 0 13 2"><path d="M0 1H13" stroke="#333" stroke-width="1.5"/></svg>
<div class="inp" style="left:11px;top:630px;width:67.40000000000009px;height:31px"></div>
<div class="t" style="left:18px;top:638.3px;font-size:14px;color:#222">居中</div>
<svg style="left:57.5px;top:643.5px" width="10" height="6" viewBox="0 0 10 6"><path d="M1 1L5 5L9 1" fill="none" stroke="#666" stroke-width="1.1"/></svg>
<div class="inp" style="left:82.79999999999995px;top:630px;width:104.20000000000005px;height:31px"></div>
<svg style="left:92.5px;top:638.5px" width="14" height="14" viewBox="0 0 14 14"><path d="M0 1.5H14M0 6.5H14" stroke="#666" stroke-width="1.3"/><path d="M0 12H14" stroke="#666" stroke-width="2.6"/></svg>
<div class="t" style="left:119px;top:638.0px;font-size:14px;color:#222">1</div>
<div class="sep" style="left:0;top:674.5px;width:271px"></div>
<div class="t" style="left:18px;top:696.8px;font-size:14px;color:#1a1a1a;font-weight:bold">选中颜色</div>
<div class="inp" style="left:11px;top:725.7px;width:103.59999999999991px;height:30.59999999999991px"></div>
<div class="a" style="left:19px;top:731.5px;width:19px;height:19px;border-radius:3px;background:#27313d"></div>
<div class="t" style="left:48.5px;top:733.8px;font-size:14px;color:#222">27313D</div>
<div class="inp" style="left:119.40000000000009px;top:725.7px;width:67.59999999999991px;height:30.59999999999991px"></div>
<div class="t" style="left:126.5px;top:733.8px;font-size:14px;color:#222">100</div>
<div class="t" style="left:169px;top:734.1px;font-size:14px;color:#999">%</div>
<div class="inp" style="left:11px;top:761.7px;width:103.59999999999991px;height:30.59999999999991px"></div>
<div class="a" style="left:19px;top:767.5px;width:19px;height:19px;border-radius:3px;background:#fbf2dd;box-shadow:inset 0 0 0 1px #e2e2e2"></div>
<div class="t" style="left:48.5px;top:769.8px;font-size:14px;color:#222">FBF2DD</div>
<div class="inp" style="left:119.40000000000009px;top:761.7px;width:67.59999999999991px;height:30.59999999999991px"></div>
<div class="t" style="left:126.5px;top:769.8px;font-size:14px;color:#222">100</div>
<div class="t" style="left:169px;top:770.1px;font-size:14px;color:#999">%</div>
<div class="inp" style="left:11px;top:797.7px;width:103.59999999999991px;height:30.59999999999991px"></div>
<div class="a" style="left:19px;top:803.5px;width:19px;height:19px;border-radius:3px;background:#eec0c0;box-shadow:inset 0 0 0 1px #e2e2e2"></div>
<div class="t" style="left:48.5px;top:805.8px;font-size:14px;color:#222">EEC0C0</div>
<div class="inp" style="left:119.40000000000009px;top:797.7px;width:67.59999999999991px;height:30.59999999999991px"></div>
<div class="t" style="left:126.5px;top:805.8px;font-size:14px;color:#222">100</div>
<div class="t" style="left:169px;top:806.1px;font-size:14px;color:#999">%</div>
<div class="inp" style="left:11px;top:833.7px;width:103.59999999999991px;height:30.59999999999991px"></div>
<div class="a" style="left:19px;top:839.5px;width:19px;height:19px;border-radius:3px;background:#6a98c4"></div>
<div class="t" style="left:48.5px;top:841.8px;font-size:14px;color:#222">6A98C4</div>
<div class="inp" style="left:119.40000000000009px;top:833.7px;width:67.59999999999991px;height:30.59999999999991px"></div>
<div class="t" style="left:126.5px;top:841.8px;font-size:14px;color:#222">100</div>
<div class="t" style="left:169px;top:842.1px;font-size:14px;color:#999">%</div>
<div class="inp" style="left:11px;top:869.7px;width:103.59999999999991px;height:30.59999999999991px"></div>
<div class="a" style="left:19px;top:875.5px;width:19px;height:19px;border-radius:3px;background:#fa7691"></div>
<div class="t" style="left:48.5px;top:877.8px;font-size:14px;color:#222">FA7691</div>
<div class="inp" style="left:119.40000000000009px;top:869.7px;width:67.59999999999991px;height:30.59999999999991px"></div>
<div class="t" style="left:126.5px;top:877.8px;font-size:14px;color:#222">100</div>
<div class="t" style="left:169px;top:878.1px;font-size:14px;color:#999">%</div>
<svg style="left:21.5px;top:914.5px" width="11" height="11" viewBox="0 0 11 11"><path d="M1 1L5.5 5L10 1M1 6L5.5 10L10 6" fill="none" stroke="#1a8cff" stroke-width="1.3"/></svg>
<div class="t" style="left:42.5px;top:913.3px;font-size:14px;color:#1a8cff">有 11 项被折叠, 点击展开</div>
<div class="sep" style="left:0;top:949px;width:271px"></div>
<div class="t" style="left:18px;top:971.8px;font-size:14px;color:#666">阴影</div>
<svg style="left:236.19999999999982px;top:972.5px" width="13" height="13" viewBox="0 0 13 13"><path d="M6.5 0V13M0 6.5H13" stroke="#666" stroke-width="1.4"/></svg>
<div class="sep" style="left:0;top:1007.5px;width:271px"></div>
<div class="t" style="left:18px;top:1029.8px;font-size:14px;color:#666">模糊</div>
<svg style="left:236.19999999999982px;top:1030.5px" width="13" height="13" viewBox="0 0 13 13"><path d="M6.5 0V13M0 6.5H13" stroke="#666" stroke-width="1.4"/></svg>
<div class="sep" style="left:0;top:1066px;width:271px"></div>
<div class="t" style="left:18px;top:1086.8px;font-size:14px;color:#666">生成网页</div>
<svg style="left:236.19999999999982px;top:1087.5px" width="13" height="13" viewBox="0 0 13 13"><path d="M6.5 0V13M0 6.5H13" stroke="#666" stroke-width="1.4"/></svg>
<div class="sep" style="left:0;top:1121.5px;width:271px"></div>
<div class="t" style="left:18px;top:1144.3px;font-size:14px;color:#666">导出</div>
<svg style="left:236.19999999999982px;top:1145.0px" width="13" height="13" viewBox="0 0 13 13"><path d="M6.5 0V13M0 6.5H13" stroke="#666" stroke-width="1.4"/></svg>
<div class="a" style="left:224.80000000000018px;top:1163.6px;width:36px;height:36px;border-radius:50%;background:#fff;box-shadow:0 1px 4px rgba(0,0,0,0.15)"></div>
<div class="t" style="left:236.80000000000018px;top:1171.6px;font-size:19px;color:#111">?</div>
</div>

</body>
</html>
